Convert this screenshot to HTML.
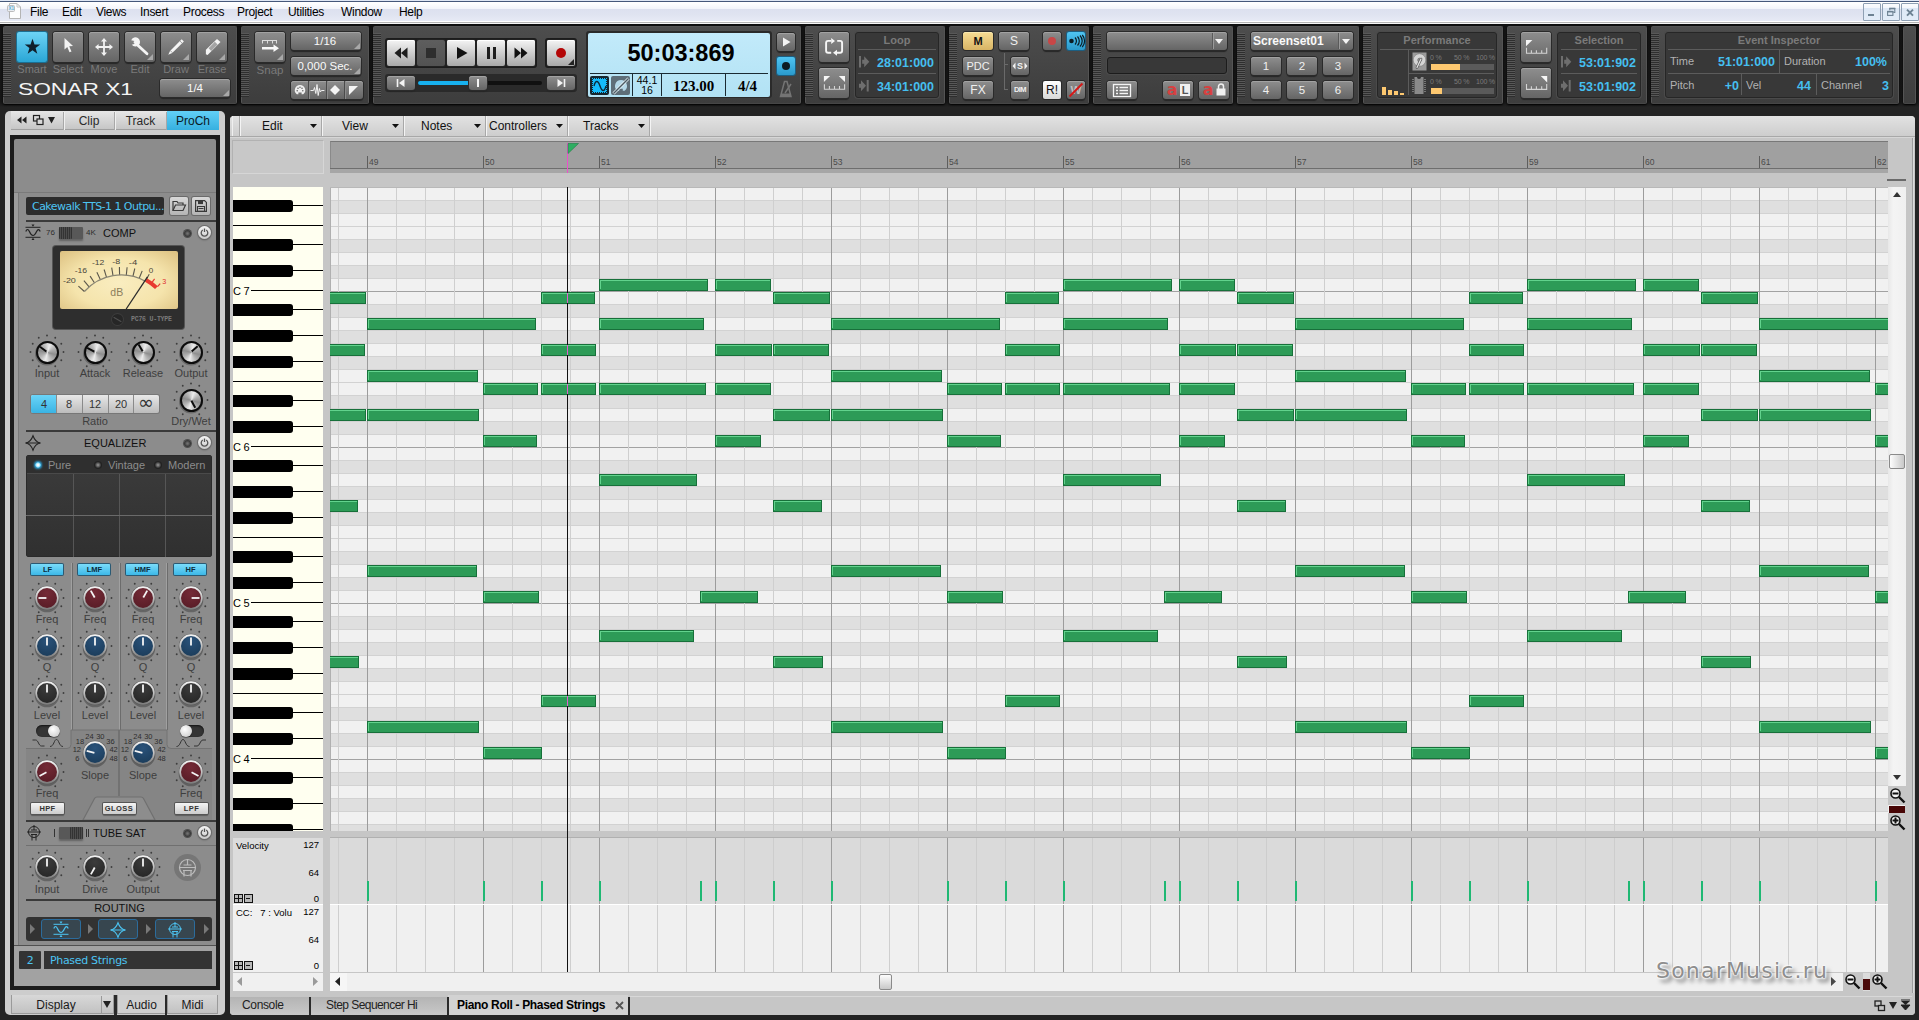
<!DOCTYPE html><html><head><meta charset="utf-8"><title>SONAR X1</title><style>
html,body{margin:0;padding:0;background:#232323;}
body{width:1919px;height:1020px;position:relative;overflow:hidden;font-family:"Liberation Sans",sans-serif;font-size:12px;color:#000;}
div{position:absolute;box-sizing:border-box;}
svg{position:absolute;overflow:visible;}
.t{white-space:nowrap;}
.c{text-align:center;}
.r{text-align:right;}
.mod{background:linear-gradient(#4d4d4d,#3d3d3d);border:1px solid #545454;border-bottom-color:#464646;border-radius:2px;box-shadow:0 1px 2px #000;}
.grip{background:repeating-linear-gradient(#585858 0,#585858 1px,#2e2e2e 1px,#2e2e2e 2px);}
.btn{background:linear-gradient(#8e8e8e,#656565);border-radius:3px;box-shadow:0 0 0 1px #2a2a2a, 0 2px 1px #262626, inset 0 1px 0 #a2a2a2;}
.lbtn{background:linear-gradient(#f4f4f4,#a8a8a8);border-radius:2px;box-shadow:0 0 0 1px #222, inset 0 1px 0 #fff;}
.disp{background:#383838;border:1px solid #262626;border-radius:3px;box-shadow:0 0 0 1px #4a4a4a;}
.dl{background:#5c5c5c;}
.cy{color:#45bff0;font-weight:bold;}
.gl{color:#7c7c7c;}
.wl{color:#c8c8c8;}
</style></head><body>
<div style="left:0px;top:0px;width:1919px;height:24px;background:linear-gradient(#ffffff 0px,#ffffff 3px,#f2f4fa 9px,#dde1ef 9.500px,#e0e4f1 15px,#e7eaf5 21px,#ffffff 21px,#ffffff 22px,#b4b4b4 22px,#b4b4b4 23px,#f6f6f6 23px);"></div>
<div style="left:0px;top:0px;width:1919px;height:1px;background:#dfe7f4;"></div>
<div style="left:0px;top:1px;width:1919px;height:1px;background:#46587a;"></div>
<div style="left:0px;top:24px;width:1919px;height:83px;background:linear-gradient(#0c0c0c 0,#141414 4px,#161616 78px,#232323 83px);"></div>
<svg style="left:0px;top:0px" width="24" height="22" viewBox="0 0 24 22"><path d="M9.500 3.500h7.500l3.500 3.500v11.500h-11z" fill="#fdfdfd" stroke="#b4b4b4"/><path d="M17 3.500v3.500h3.500" fill="none" stroke="#c4c4c4"/><rect x="7.500" y="5.500" width="7" height="6" rx="1" fill="#e9ecf1" stroke="#bcbcbc"/><text x="8.500" y="10.300" font-size="4.500" fill="#5ab0d8" font-family="Liberation Sans, sans-serif" font-weight="bold">X1</text></svg>
<div class="t" style="left:30px;top:4px;width:60px;height:17px;line-height:17px;font-size:12px;color:#000;letter-spacing:-0.3px;">File</div>
<div class="t" style="left:62px;top:4px;width:60px;height:17px;line-height:17px;font-size:12px;color:#000;letter-spacing:-0.3px;">Edit</div>
<div class="t" style="left:96px;top:4px;width:60px;height:17px;line-height:17px;font-size:12px;color:#000;letter-spacing:-0.3px;">Views</div>
<div class="t" style="left:140px;top:4px;width:60px;height:17px;line-height:17px;font-size:12px;color:#000;letter-spacing:-0.3px;">Insert</div>
<div class="t" style="left:183px;top:4px;width:60px;height:17px;line-height:17px;font-size:12px;color:#000;letter-spacing:-0.3px;">Process</div>
<div class="t" style="left:237px;top:4px;width:60px;height:17px;line-height:17px;font-size:12px;color:#000;letter-spacing:-0.3px;">Project</div>
<div class="t" style="left:288px;top:4px;width:60px;height:17px;line-height:17px;font-size:12px;color:#000;letter-spacing:-0.3px;">Utilities</div>
<div class="t" style="left:341px;top:4px;width:60px;height:17px;line-height:17px;font-size:12px;color:#000;letter-spacing:-0.3px;">Window</div>
<div class="t" style="left:399px;top:4px;width:60px;height:17px;line-height:17px;font-size:12px;color:#000;letter-spacing:-0.3px;">Help</div>
<div style="left:1863px;top:3px;width:18px;height:18px;border:1px solid #8fa0b4;background:linear-gradient(#fbfcfe 0,#f4f7fc 22%,#dde8f6 24%,#e2ecf8 100%);border-radius:1px;"></div>
<div style="left:1882px;top:3px;width:18px;height:18px;border:1px solid #8fa0b4;background:linear-gradient(#fbfcfe 0,#f4f7fc 22%,#dde8f6 24%,#e2ecf8 100%);border-radius:1px;"></div>
<div style="left:1901px;top:3px;width:18px;height:18px;border:1px solid #8fa0b4;background:linear-gradient(#fbfcfe 0,#f4f7fc 22%,#dde8f6 24%,#e2ecf8 100%);border-radius:1px;"></div>
<div style="left:1868px;top:14px;width:6px;height:2px;background:#6d8293;"></div>
<svg style="left:1885px;top:6px" width="12" height="12" viewBox="0 0 12 12"><path d="M4.8 4.2V2.6h5v3.900h-1.400" fill="none" stroke="#6d8293" stroke-width="1.100"/><path d="M4.300 2.400h6" stroke="#6d8293" stroke-width="1.400"/><rect x="2.600" y="5.600" width="5.300" height="3.800" fill="none" stroke="#6d8293" stroke-width="1.100"/><path d="M2.100 5.600h6.300" stroke="#6d8293" stroke-width="1.500"/></svg>
<svg style="left:1904px;top:6px" width="12" height="12" viewBox="0 0 12 12"><path d="M3 3.600l6 6M9 3.600l-6 6" stroke="#6d8293" stroke-width="2"/></svg>
<div class="mod" style="left:3px;top:26px;width:234px;height:78px;"></div>
<div class="grip" style="left:3px;top:33px;width:8px;height:64px;"></div>
<div class="mod" style="left:241px;top:26px;width:128px;height:78px;"></div>
<div class="grip" style="left:241px;top:33px;width:8px;height:64px;"></div>
<div class="mod" style="left:373px;top:26px;width:428px;height:78px;"></div>
<div class="grip" style="left:373px;top:33px;width:8px;height:64px;"></div>
<div class="mod" style="left:805px;top:26px;width:140px;height:78px;"></div>
<div class="grip" style="left:805px;top:33px;width:8px;height:64px;"></div>
<div class="mod" style="left:949px;top:26px;width:140px;height:78px;"></div>
<div class="grip" style="left:949px;top:33px;width:8px;height:64px;"></div>
<div class="mod" style="left:1093px;top:26px;width:140px;height:78px;"></div>
<div class="grip" style="left:1093px;top:33px;width:8px;height:64px;"></div>
<div class="mod" style="left:1237px;top:26px;width:122px;height:78px;"></div>
<div class="grip" style="left:1237px;top:33px;width:8px;height:64px;"></div>
<div class="mod" style="left:1363px;top:26px;width:140px;height:78px;"></div>
<div class="grip" style="left:1363px;top:33px;width:8px;height:64px;"></div>
<div class="mod" style="left:1507px;top:26px;width:140px;height:78px;"></div>
<div class="grip" style="left:1507px;top:33px;width:8px;height:64px;"></div>
<div class="mod" style="left:1651px;top:26px;width:248px;height:78px;"></div>
<div class="grip" style="left:1651px;top:33px;width:8px;height:64px;"></div>
<div class="mod" style="left:1903px;top:26px;width:13px;height:78px;"></div>
<div style="left:17px;top:32px;width:30px;height:30px;background:linear-gradient(#6dd3f6,#2aa6d6);border-radius:2px;box-shadow:0 0 0 1px #1c6f92;"></div>
<div class="t c" style="left:11px;top:63px;width:42px;height:13px;line-height:13px;font-size:11px;color:#7a7a7a;">Smart</div>
<div class="btn" style="left:53px;top:32px;width:30px;height:30px;"></div>
<div class="t c" style="left:47px;top:63px;width:42px;height:13px;line-height:13px;font-size:11px;color:#7a7a7a;">Select</div>
<div class="btn" style="left:89px;top:32px;width:30px;height:30px;"></div>
<div class="t c" style="left:83px;top:63px;width:42px;height:13px;line-height:13px;font-size:11px;color:#7a7a7a;">Move</div>
<div class="btn" style="left:125px;top:32px;width:30px;height:30px;"></div>
<div class="t c" style="left:119px;top:63px;width:42px;height:13px;line-height:13px;font-size:11px;color:#7a7a7a;">Edit</div>
<svg style="left:147px;top:54px" width="6" height="6"><path d="M6 0v6h-6z" fill="#a8a8a8"/></svg>
<div class="btn" style="left:161px;top:32px;width:30px;height:30px;"></div>
<div class="t c" style="left:155px;top:63px;width:42px;height:13px;line-height:13px;font-size:11px;color:#7a7a7a;">Draw</div>
<svg style="left:183px;top:54px" width="6" height="6"><path d="M6 0v6h-6z" fill="#a8a8a8"/></svg>
<div class="btn" style="left:197px;top:32px;width:30px;height:30px;"></div>
<div class="t c" style="left:191px;top:63px;width:42px;height:13px;line-height:13px;font-size:11px;color:#7a7a7a;">Erase</div>
<svg style="left:219px;top:54px" width="6" height="6"><path d="M6 0v6h-6z" fill="#a8a8a8"/></svg>
<svg style="left:24px;top:38px" width="17" height="17" viewBox="0 0 17 17"><path d="M8.5 0.8l2 5.6h5.7l-4.6 3.5 1.7 5.8-4.8-3.5-4.8 3.5 1.7-5.8-4.6-3.5h5.7z" fill="#10202c"/></svg>
<svg style="left:63px;top:37px" width="12" height="18" viewBox="0 0 12 18"><path d="M1.5 1l0 11.5 2.8-2.6 2.2 5.4 2-0.9-2.3-5.2 3.8-0.2z" fill="#f2f2f2"/></svg>
<svg style="left:94px;top:37px" width="20" height="20" viewBox="0 0 20 20"><path d="M10 1l3 3.6h-2.1v4.5h4.5V7l3.6 3-3.6 3v-2.1h-4.5v4.5H13l-3 3.6-3-3.6h2.1v-4.5H4.6V13L1 10l3.6-3v2.1h4.5V4.6H7z" fill="#f2f2f2"/></svg>
<svg style="left:125px;top:32px" width="30" height="30" viewBox="0 0 30 30"><path d="M6.2 8.200A4.600 4.600 0 1 1 6.800 12.800L9.800 11.800A1.400 1.400 0 0 1 9.500 9.100z" fill="#f4f4f4"/><path d="M12.500 13L22 21.800" stroke="#f4f4f4" stroke-width="2.800" stroke-linecap="round"/></svg>
<svg style="left:161px;top:32px" width="30" height="30" viewBox="0 0 30 30"><path d="M7.300 22.800L9 18.900L20.700 7.200L22.900 9.400L11.200 21.100z" fill="#f4f4f4"/><path d="M9.300 18.600l2.200 2.200M18.900 9l2.200 2.200" stroke="#7c7c7c" stroke-width=".7"/></svg>
<svg style="left:197px;top:32px" width="30" height="30" viewBox="0 0 30 30"><path d="M20 7L23.500 10L10.600 23L8.900 22.200L8.900 17.800z" fill="#f4f4f4"/><path d="M17.800 9.800L20.600 12.400L14.200 18.900L11.600 16.200z" fill="#a4a4a4"/></svg>
<svg style="left:18px;top:83px" width="116" height="13" viewBox="0 0 116 13"><text x="0" y="12" font-family="Liberation Sans, sans-serif" font-size="16.5" fill="#f4f4f4" textLength="115" lengthAdjust="spacingAndGlyphs" font-weight="normal">SONAR X1</text></svg>
<div class="btn" style="left:160px;top:79px;width:70px;height:18px;"></div>
<div class="t c" style="left:160px;top:78.8px;width:70px;height:18px;line-height:18px;color:#fafafa;font-size:11.500px;">1/4</div>
<svg style="left:223px;top:90px" width="6" height="6"><path d="M6 0v6h-6z" fill="#a8a8a8"/></svg>
<div class="btn" style="left:255px;top:32px;width:30px;height:30px;"></div>
<svg style="left:259px;top:38px" width="22" height="18" viewBox="0 0 22 18"><path d="M3 2.500h15M3.500 2.500v3M8.500 2.500v3M13.500 2.500v3M17.500 2.500v3" stroke="#dcdcdc" stroke-width="1" fill="none"/><path d="M3 9h11.500V6.500L20 10.200l-5.500 3.700V11.500H3z" fill="#f8f8f8"/></svg>
<svg style="left:277px;top:54px" width="6" height="6"><path d="M6 0v6h-6z" fill="#a8a8a8"/></svg>
<div class="t c" style="left:249px;top:64px;width:42px;height:13px;line-height:13px;font-size:11.5px;color:#7a7a7a;">Snap</div>
<div class="btn" style="left:291px;top:32px;width:70px;height:18px;"></div>
<div class="t c" style="left:291px;top:31.8px;width:68px;height:18px;line-height:18px;color:#fafafa;font-size:11.500px;">1/16</div>
<svg style="left:354px;top:43px" width="6" height="6"><path d="M6 0v6h-6z" fill="#a8a8a8"/></svg>
<div class="btn" style="left:291px;top:57px;width:70px;height:18px;"></div>
<div class="t c" style="left:291px;top:56.6px;width:68px;height:18px;line-height:18px;color:#fafafa;font-size:11.500px;">0,000 Sec.</div>
<svg style="left:354px;top:68px" width="6" height="6"><path d="M6 0v6h-6z" fill="#a8a8a8"/></svg>
<div class="btn" style="left:291px;top:81px;width:72px;height:18px;"></div>
<div style="left:308px;top:81px;width:1px;height:18px;background:#4a4a4a;"></div>
<div style="left:309px;top:81px;width:1px;height:18px;background:#8a8a8a;"></div>
<div style="left:326px;top:81px;width:1px;height:18px;background:#4a4a4a;"></div>
<div style="left:327px;top:81px;width:1px;height:18px;background:#8a8a8a;"></div>
<div style="left:344px;top:81px;width:1px;height:18px;background:#4a4a4a;"></div>
<div style="left:345px;top:81px;width:1px;height:18px;background:#8a8a8a;"></div>
<svg style="left:292.500px;top:83px" width="14" height="14" viewBox="0 0 14 14"><path d="M7 2a5.2 5.2 0 0 1 3.2 9.3H8.6V9.6H5.4v1.7H3.8A5.2 5.2 0 0 1 7 2z" fill="#f0f0f0"/><g fill="#666"><circle cx="4.2" cy="7.8" r=".8"/><circle cx="5" cy="5.2" r=".8"/><circle cx="7" cy="4.2" r=".8"/><circle cx="9" cy="5.2" r=".8"/><circle cx="9.8" cy="7.8" r=".8"/></g></svg>
<svg style="left:310px;top:83px" width="15" height="14" viewBox="0 0 15 14"><path d="M0.5 7.5h3l1-3 1.3 6 1.2-9 1.2 11 1.2-7 1 3.5 1-1.5h3" fill="none" stroke="#f0f0f0" stroke-width="1"/></svg>
<svg style="left:329px;top:84px" width="12" height="12" viewBox="0 0 12 12"><path d="M6 1l5 5-5 5-5-5z" fill="#f4f4f4"/></svg>
<svg style="left:348px;top:85px" width="11" height="11" viewBox="0 0 11 11"><path d="M1 1h9L1 10z" fill="#f4f4f4"/></svg>
<div style="left:385px;top:38px;width:152px;height:30px;background:#1c1c1c;border-radius:3px;"></div>
<div class="lbtn" style="left:387px;top:40px;width:28px;height:26px;"></div>
<div style="left:417px;top:40px;width:28px;height:26px;background:linear-gradient(#5e5e5e,#525252);border-radius:2px;box-shadow:0 0 0 1px #222;"></div>
<div class="lbtn" style="left:447px;top:40px;width:28px;height:26px;"></div>
<div class="lbtn" style="left:477px;top:40px;width:28px;height:26px;"></div>
<div class="lbtn" style="left:507px;top:40px;width:28px;height:26px;"></div>
<svg style="left:394px;top:46px" width="14" height="14" viewBox="0 0 14 14"><path d="M7 1.5v11L0.5 7zM13.5 1.5v11L7 7z" fill="#1e1e1e"/></svg>
<div style="left:426px;top:48px;width:10px;height:10px;background:#2e2e2e;"></div>
<svg style="left:456px;top:46px" width="12" height="14" viewBox="0 0 12 14"><path d="M1 1l10.5 6L1 13z" fill="#111"/></svg>
<div style="left:486.5px;top:47px;width:3px;height:12px;background:#1e1e1e;"></div>
<div style="left:492.5px;top:47px;width:3px;height:12px;background:#1e1e1e;"></div>
<svg style="left:514px;top:46px" width="14" height="14" viewBox="0 0 14 14"><path d="M0.5 1.5v11L7 7zM7 1.5v11L13.500 7z" fill="#111"/></svg>
<div style="left:545px;top:38px;width:32px;height:30px;background:#1c1c1c;border-radius:3px;"></div>
<div class="lbtn" style="left:547px;top:40px;width:28px;height:26px;"></div>
<div style="left:556px;top:48px;width:10px;height:10px;background:#b40606;border-radius:50%;"></div>
<svg style="left:568px;top:59px" width="6" height="6"><path d="M6 0v6h-6z" fill="#222"/></svg>
<div style="left:385px;top:74px;width:192px;height:18px;background:#2a2a2a;border-radius:3px;"></div>
<div class="btn" style="left:387px;top:76px;width:28px;height:14px;"></div>
<svg style="left:396px;top:78px" width="10" height="10" viewBox="0 0 10 10"><path d="M1.5 1v8" stroke="#f4f4f4" stroke-width="1.6"/><path d="M8.5 1v8L3 5z" fill="#f4f4f4"/></svg>
<div class="btn" style="left:547px;top:76px;width:28px;height:14px;"></div>
<svg style="left:556px;top:78px" width="10" height="10" viewBox="0 0 10 10"><path d="M8.500 1v8" stroke="#f4f4f4" stroke-width="1.6"/><path d="M1.5 1v8L7 5z" fill="#f4f4f4"/></svg>
<div style="left:418px;top:81px;width:124px;height:4px;background:#101010;border-radius:2px;"></div>
<div style="left:418px;top:81px;width:55px;height:4px;background:#17b0ee;border-radius:2px;"></div>
<div class="btn" style="left:469px;top:76px;width:18px;height:14px;"></div>
<div style="left:477px;top:79px;width:2px;height:8px;background:#f4f4f4;"></div>
<div style="left:586px;top:31px;width:186px;height:67px;background:#2a2a2a;border-radius:3px;"></div>
<div style="left:588px;top:33px;width:182px;height:64px;background:linear-gradient(#c2eafa,#b2e2f4);border-radius:2px;"></div>
<div class="t c" style="left:590px;top:35px;width:182px;height:36px;line-height:36px;font-size:23.5px;font-weight:bold;color:#000;letter-spacing:0px;">50:03:869</div>
<div style="left:590px;top:73px;width:178px;height:1px;background:#1a2a32;"></div>
<div style="left:590px;top:76px;width:19px;height:19px;background:#14bcfc;border:3px solid #16262e;border-radius:2px;"></div>
<div style="left:592px;top:78px;width:15px;height:15px;border:1px dotted #14bcfc;"></div>
<svg style="left:593px;top:80px" width="14" height="12" viewBox="0 0 14 12"><path d="M1 6c1.500-6 4-6 6 0s4.500 6 6 0" fill="none" stroke="#0c2c3c" stroke-width="1.4"/></svg>
<div style="left:611px;top:76px;width:19px;height:19px;background:#5e6e78;border-radius:2px;"></div>
<svg style="left:611.500px;top:76.500px" width="18" height="18" viewBox="0 0 18 18"><path d="M9 3a6 6 0 0 1 3.700 10.700H10.800V11.800H7.200v1.900H5.300A6 6 0 0 1 9 3z" fill="#b4d8e8"/><path d="M1.500 16.500L16.500 1.500" stroke="#e8f4f8" stroke-width="2.800"/><path d="M1.500 16.500L16.500 1.500" stroke="#4a5a64" stroke-width="1.400"/></svg>
<div style="left:632px;top:74px;width:1px;height:22px;background:#1a2a32;"></div>
<div style="left:661px;top:74px;width:1px;height:22px;background:#1a2a32;"></div>
<div style="left:725px;top:74px;width:1px;height:22px;background:#1a2a32;"></div>
<div class="t c" style="left:633px;top:75px;width:28px;height:11px;line-height:11px;font-size:10.5px;color:#000;">44.1</div>
<div class="t c" style="left:633px;top:85px;width:28px;height:11px;line-height:11px;font-size:10.5px;color:#000;">16</div>
<div class="t c" style="left:662px;top:76px;width:63px;height:20px;line-height:20px;font-size:15px;font-weight:bold;font-family:'Liberation Serif',serif;">123.00</div>
<div class="t c" style="left:726px;top:76px;width:43px;height:20px;line-height:20px;font-size:15px;font-weight:bold;font-family:'Liberation Serif',serif;">4/4</div>
<div class="btn" style="left:777px;top:33px;width:18px;height:18px;"></div>
<svg style="left:782px;top:37px" width="9" height="10" viewBox="0 0 9 10"><path d="M1 0.500l7.500 4.500L1 9.500z" fill="#f4f4f4"/></svg>
<div style="left:777px;top:57px;width:18px;height:18px;background:linear-gradient(#4fc4f2,#2a9acc);border-radius:2px;box-shadow:0 0 0 1px #1c5f82;"></div>
<div style="left:782px;top:62px;width:8px;height:8px;background:#0c1c24;border-radius:50%;"></div>
<svg style="left:779px;top:80px" width="14" height="18" viewBox="0 0 14 18"><path d="M5.500 1.500h2.500l4 15h-10.500z" fill="none" stroke="#747474" stroke-width="1.500"/><path d="M6 13L12 4" stroke="#747474" stroke-width="1.500"/><path d="M2 13.500h10v3h-10.500z" fill="#747474"/></svg>
<div class="btn" style="left:819px;top:32px;width:30px;height:30px;"></div>
<svg style="left:819px;top:32px" width="30" height="30" viewBox="0 0 30 30"><path d="M12.200 8.900H9.100a2 2 0 0 0-2 2V18.800a2 2 0 0 0 2 2H12.200M18.200 8.900H21.100a2 2 0 0 1 2 2V18.800a2 2 0 0 1-2 2H18" fill="none" stroke="#f6f6f6" stroke-width="1.900"/><path d="M12.200 5.900L16 8.900L12.200 11.900zM18 17.800L14 20.800L18 23.800z" fill="#f6f6f6"/></svg>
<div class="btn" style="left:819px;top:68px;width:30px;height:30px;"></div>
<svg style="left:819px;top:68px" width="30" height="30" viewBox="0 0 30 30"><path d="M4.900 7.900h6.200L4.900 14.100zM26 7.900h-6.200L26 14.100z" fill="#f6f6f6"/><path d="M5.400 16.300v5h20.200v-5M10.400 18v3.300M15.500 18v3.300M20.500 18v3.300" fill="none" stroke="#d4d4d4" stroke-width="1.100"/></svg>
<div class="disp" style="left:855px;top:32px;width:84px;height:66px;"></div>
<div class="t c" style="left:855px;top:33px;width:84px;height:15px;line-height:15px;font-size:11px;font-weight:bold;color:#7a7a7a;">Loop</div>
<div class="dl" style="left:858px;top:49px;width:78px;height:1px;"></div>
<div class="dl" style="left:858px;top:73px;width:78px;height:1px;"></div>
<div class="t r cy" style="left:860px;top:55px;width:74px;height:16px;line-height:16px;font-size:12.5px;">28:01:000</div>
<div class="t r cy" style="left:860px;top:79px;width:74px;height:16px;line-height:16px;font-size:12.5px;">34:01:000</div>
<svg style="left:859px;top:56px" width="12" height="12" viewBox="0 0 12 12"><rect x="0" y="0" width="2" height="11.500" fill="#6e6e6e"/><path d="M3.200 3.700h2V0.300L10.300 5.700L5.200 11.200V7.700h-2z" fill="#6e6e6e"/></svg>
<svg style="left:859px;top:80px" width="12" height="12" viewBox="0 0 12 12"><rect x="7.700" y="0" width="2" height="11.500" fill="#6e6e6e"/><path d="M0 3.700h2V0.300L7 5.700L2 11.200V7.700h-2z" fill="#6e6e6e"/></svg>
<div class="btn" style="left:963px;top:32px;width:30px;height:18px;background:linear-gradient(#f6dc94,#d8b464);box-shadow:0 0 0 1px #2a2a2a, inset 0 1px 0 #f8e8b0;"></div>
<div class="t c" style="left:963px;top:32px;width:30px;height:18px;line-height:18px;color:#f0f0f0;font-size:11px;color:#111;font-weight:bold;">M</div>
<div class="btn" style="left:999px;top:32px;width:30px;height:18px;"></div>
<div class="t c" style="left:999px;top:32px;width:30px;height:18px;line-height:18px;color:#f0f0f0;font-size:12px;">S</div>
<div class="btn" style="left:1043px;top:32px;width:18px;height:18px;"></div>
<div style="left:1048px;top:37px;width:8px;height:8px;background:#c84646;border-radius:50%;"></div>
<div style="left:1067px;top:32px;width:18px;height:18px;background:linear-gradient(#4fc4f2,#2a9acc);border-radius:2px;box-shadow:0 0 0 1px #1c5f82;"></div>
<svg style="left:1068px;top:34px" width="16" height="14" viewBox="0 0 16 14"><circle cx="3.500" cy="7" r="2.300" fill="#0c1c24"/><path d="M7 3.500a5 5 0 0 1 0 7M9.500 2.500a6.500 6.500 0 0 1 0 9M12 1.500a8 8 0 0 1 0 11M14.300 1a9 9 0 0 1 0 12" fill="none" stroke="#0c1c24" stroke-width="1.200"/></svg>
<div class="btn" style="left:963px;top:57px;width:30px;height:18px;"></div>
<div class="t c" style="left:963px;top:57px;width:30px;height:18px;line-height:18px;color:#f0f0f0;font-size:11px;">PDC</div>
<div class="btn" style="left:963px;top:81px;width:30px;height:18px;"></div>
<div class="t c" style="left:963px;top:81px;width:30px;height:18px;line-height:18px;color:#f0f0f0;font-size:12px;">FX</div>
<div style="left:1004px;top:53px;width:1px;height:37px;background:#6a6a6a;"></div>
<div style="left:1004px;top:64px;width:4px;height:1px;background:#6a6a6a;"></div>
<div style="left:1004px;top:89px;width:4px;height:1px;background:#6a6a6a;"></div>
<div class="btn" style="left:1011px;top:57px;width:18px;height:18px;"></div>
<div class="t c" style="left:1011px;top:57px;width:18px;height:18px;line-height:18px;color:#f0f0f0;font-size:9px;font-weight:bold;">S</div>
<svg style="left:1012px;top:62px" width="16" height="8" viewBox="0 0 16 8"><path d="M3.500 0.500v7L0.500 4zM12.500 0.500v7l3-3.500z" fill="#f0f0f0"/></svg>
<div class="btn" style="left:1011px;top:81px;width:18px;height:18px;"></div>
<div class="t c" style="left:1011px;top:81px;width:18px;height:18px;line-height:18px;color:#f0f0f0;font-size:7.5px;font-weight:bold;letter-spacing:-0.600px;">DIM</div>
<div style="left:1043px;top:81px;width:18px;height:18px;background:linear-gradient(#ffffff,#d8d8d8);border-radius:2px;box-shadow:0 0 0 1px #2a2a2a;"></div>
<div class="t c" style="left:1043px;top:81px;width:18px;height:18px;line-height:18px;color:#111;font-size:12px;">R!</div>
<div class="btn" style="left:1067px;top:81px;width:18px;height:18px;"></div>
<div class="t c" style="left:1067px;top:81px;width:18px;height:18px;line-height:18px;color:#f0f0f0;font-size:11.5px;color:#c0c0c0;font-weight:bold;">W</div>
<svg style="left:1068px;top:82px" width="16" height="16" viewBox="0 0 16 16"><path d="M1.500 14.500L14.500 1.500" stroke="#d41818" stroke-width="2"/></svg>
<div class="btn" style="left:1107px;top:32px;width:120px;height:18px;"></div>
<div style="left:1212px;top:33px;width:1px;height:16px;background:#5a5a5a;"></div>
<div style="left:1213px;top:33px;width:1px;height:16px;background:#9a9a9a;"></div>
<svg style="left:1214px;top:38px" width="10" height="7"><path d="M1 1h8L5 6z" fill="#f4f4f4"/></svg>
<div style="left:1107px;top:57px;width:120px;height:17px;background:#383838;border:1px solid #1c1c1c;border-radius:3px;box-shadow:0 0 0 1px #4a4a4a;"></div>
<div class="btn" style="left:1107px;top:81px;width:30px;height:18px;"></div>
<svg style="left:1113px;top:84px" width="18" height="13" viewBox="0 0 18 13"><rect x="0.500" y="0.500" width="17" height="12" fill="none" stroke="#f4f4f4" stroke-width="1.300"/><path d="M3 3.500h2M3 6.500h2M3 9.500h2M6.500 3.500h8.500M6.500 6.500h8.500M6.500 9.500h8.500" stroke="#f4f4f4" stroke-width="1.600"/></svg>
<div class="btn" style="left:1163px;top:81px;width:30px;height:18px;"></div>
<div class="t c" style="left:1165px;top:81px;width:14px;height:18px;line-height:18px;color:#d84040;font-size:15px;font-weight:bold;font-family:'DejaVu Sans',sans-serif;transform:scaleX(1.05);">a</div>
<div style="left:1180px;top:84px;width:10px;height:12px;background:#f0f0f0;"></div>
<div class="t c" style="left:1180px;top:84px;width:10px;height:12px;line-height:12px;color:#555;font-size:11px;font-weight:bold;">L</div>
<div class="btn" style="left:1199px;top:81px;width:30px;height:18px;"></div>
<div class="t c" style="left:1201px;top:81px;width:14px;height:18px;line-height:18px;color:#d84040;font-size:15px;font-weight:bold;font-family:'DejaVu Sans',sans-serif;transform:scaleX(1.05);">a</div>
<svg style="left:1216px;top:83px" width="10" height="13" viewBox="0 0 10 13"><path d="M2.500 6V3.500a2.500 2.500 0 0 1 5 0V6" fill="none" stroke="#f0f0f0" stroke-width="1.500"/><rect x="0.500" y="5.500" width="9" height="7" fill="#f0f0f0"/></svg>
<div class="btn" style="left:1251px;top:32px;width:102px;height:18px;"></div>
<div class="t" style="left:1253px;top:32px;width:90px;height:18px;line-height:18px;color:#fafafa;font-size:12px;font-weight:bold;">Screenset01</div>
<div style="left:1338px;top:33px;width:1px;height:16px;background:#5a5a5a;"></div>
<div style="left:1339px;top:33px;width:1px;height:16px;background:#9a9a9a;"></div>
<svg style="left:1341px;top:38px" width="10" height="7"><path d="M1 1h8L5 6z" fill="#f4f4f4"/></svg>
<div class="btn" style="left:1251px;top:57px;width:30px;height:18px;"></div>
<div class="t c" style="left:1251px;top:57px;width:30px;height:18px;line-height:18px;color:#f0f0f0;font-size:11.5px;">1</div>
<div class="btn" style="left:1287px;top:57px;width:30px;height:18px;"></div>
<div class="t c" style="left:1287px;top:57px;width:30px;height:18px;line-height:18px;color:#f0f0f0;font-size:11.5px;">2</div>
<div class="btn" style="left:1323px;top:57px;width:30px;height:18px;"></div>
<div class="t c" style="left:1323px;top:57px;width:30px;height:18px;line-height:18px;color:#f0f0f0;font-size:11.5px;">3</div>
<div class="btn" style="left:1251px;top:81px;width:30px;height:18px;"></div>
<div class="t c" style="left:1251px;top:81px;width:30px;height:18px;line-height:18px;color:#f0f0f0;font-size:11.5px;">4</div>
<div class="btn" style="left:1287px;top:81px;width:30px;height:18px;"></div>
<div class="t c" style="left:1287px;top:81px;width:30px;height:18px;line-height:18px;color:#f0f0f0;font-size:11.5px;">5</div>
<div class="btn" style="left:1323px;top:81px;width:30px;height:18px;"></div>
<div class="t c" style="left:1323px;top:81px;width:30px;height:18px;line-height:18px;color:#f0f0f0;font-size:11.5px;">6</div>
<div class="disp" style="left:1377px;top:32px;width:120px;height:66px;"></div>
<div class="t c" style="left:1377px;top:33px;width:120px;height:15px;line-height:15px;font-size:11px;font-weight:bold;color:#7a7a7a;">Performance</div>
<div class="dl" style="left:1380px;top:49px;width:114px;height:1px;"></div>
<div class="dl" style="left:1408px;top:50px;width:1px;height:45px;"></div>
<div class="dl" style="left:1409px;top:73px;width:85px;height:1px;"></div>
<div style="left:1382px;top:87px;width:4px;height:8px;background:#fdc870;"></div>
<div style="left:1388px;top:90px;width:4px;height:5px;background:#fdc870;"></div>
<div style="left:1394px;top:91px;width:4px;height:4px;background:#fdc870;"></div>
<div style="left:1400px;top:93px;width:4px;height:2px;background:#fdc870;"></div>
<svg style="left:1412px;top:52px" width="15" height="19" viewBox="0 0 15 19"><rect x="0.500" y="0.500" width="14" height="18" fill="#9a9a9a"/><circle cx="7.500" cy="8" r="6.300" fill="#d4d4d4" stroke="#777" stroke-width=".6"/><circle cx="7.500" cy="8" r="1.800" fill="#9a9a9a" stroke="#555" stroke-width=".6"/><path d="M9 7L5 15.500" stroke="#555" stroke-width="2.600" stroke-linecap="round"/><path d="M9 7L5 15.500" stroke="#e4e4e4" stroke-width="1.300" stroke-linecap="round"/></svg>
<svg style="left:1412px;top:76px" width="14" height="19" viewBox="0 0 14 19"><rect x="2.500" y="1" width="9" height="17" fill="#8a8a8a"/><path d="M5 1a2 2 0 0 0 4 0z" fill="#323232"/><path d="M1 3v14M13 3v14" stroke="#8a8a8a" stroke-width="1.500" stroke-dasharray="1 1"/></svg>
<div class="t" style="left:1430px;top:54px;width:20px;height:8px;line-height:8px;font-size:7px;color:#7a7a7a;letter-spacing:-0.200px;">0 %</div>
<div class="t" style="left:1454px;top:54px;width:22px;height:8px;line-height:8px;font-size:7px;color:#7a7a7a;letter-spacing:-0.200px;">50 %</div>
<div class="t" style="left:1476px;top:54px;width:24px;height:8px;line-height:8px;font-size:7px;color:#7a7a7a;letter-spacing:-0.200px;">100 %</div>
<div class="t" style="left:1430px;top:78px;width:20px;height:8px;line-height:8px;font-size:7px;color:#7a7a7a;letter-spacing:-0.200px;">0 %</div>
<div class="t" style="left:1454px;top:78px;width:22px;height:8px;line-height:8px;font-size:7px;color:#7a7a7a;letter-spacing:-0.200px;">50 %</div>
<div class="t" style="left:1476px;top:78px;width:24px;height:8px;line-height:8px;font-size:7px;color:#7a7a7a;letter-spacing:-0.200px;">100 %</div>
<div style="left:1431px;top:64px;width:63px;height:6px;background:#5a5a5a;"></div>
<div style="left:1431px;top:64px;width:29px;height:6px;background:#fdc870;"></div>
<div style="left:1431px;top:88px;width:63px;height:6px;background:#5a5a5a;"></div>
<div style="left:1431px;top:88px;width:11px;height:6px;background:#fdc870;"></div>
<div class="btn" style="left:1521px;top:32px;width:30px;height:30px;"></div>
<svg style="left:1521px;top:32px" width="30" height="30" viewBox="0 0 30 30"><path d="M5 7.900h6.400L5 14.300z" fill="#f6f6f6"/><path d="M5.500 15.800v5.500h20.200v-5.500M10.400 18.300v3M15.400 18.300v3M20.700 18.300v3" fill="none" stroke="#d4d4d4" stroke-width="1.100"/></svg>
<div class="btn" style="left:1521px;top:68px;width:30px;height:30px;"></div>
<svg style="left:1521px;top:68px" width="30" height="30" viewBox="0 0 30 30"><path d="M26.200 8h-6.400L26.200 14.500z" fill="#f6f6f6"/><path d="M5.500 15.900v5.500h20.200v-5.500M10.400 18.300v3M15.400 18.300v3M20.700 18.300v3" fill="none" stroke="#d4d4d4" stroke-width="1.100"/></svg>
<div class="disp" style="left:1557px;top:32px;width:84px;height:66px;"></div>
<div class="t c" style="left:1557px;top:33px;width:84px;height:15px;line-height:15px;font-size:11px;font-weight:bold;color:#7a7a7a;">Selection</div>
<div class="dl" style="left:1561px;top:49px;width:76px;height:1px;"></div>
<div class="dl" style="left:1561px;top:73px;width:76px;height:1px;"></div>
<div class="t r cy" style="left:1561px;top:55px;width:75px;height:16px;line-height:16px;font-size:12.5px;">53:01:902</div>
<div class="t r cy" style="left:1561px;top:79px;width:75px;height:16px;line-height:16px;font-size:12.5px;">53:01:902</div>
<svg style="left:1561px;top:56px" width="12" height="12" viewBox="0 0 12 12"><rect x="0" y="0" width="2" height="11.500" fill="#6e6e6e"/><path d="M3.200 3.700h2V0.300L10.300 5.700L5.200 11.200V7.700h-2z" fill="#6e6e6e"/></svg>
<svg style="left:1561px;top:80px" width="12" height="12" viewBox="0 0 12 12"><rect x="7.700" y="0" width="2" height="11.500" fill="#6e6e6e"/><path d="M0 3.700h2V0.300L7 5.700L2 11.200V7.700h-2z" fill="#6e6e6e"/></svg>
<div class="disp" style="left:1665px;top:32px;width:228px;height:66px;"></div>
<div class="t c" style="left:1665px;top:33px;width:228px;height:15px;line-height:15px;font-size:11px;font-weight:bold;color:#7a7a7a;">Event Inspector</div>
<div class="dl" style="left:1668px;top:49px;width:222px;height:1px;"></div>
<div class="dl" style="left:1668px;top:73px;width:222px;height:1px;"></div>
<div class="dl" style="left:1779px;top:50px;width:1px;height:23px;"></div>
<div class="dl" style="left:1741px;top:74px;width:1px;height:21px;"></div>
<div class="dl" style="left:1816px;top:74px;width:1px;height:21px;"></div>
<div class="t" style="left:1670px;top:53px;width:40px;height:16px;line-height:16px;font-size:11px;color:#b2b2b2;">Time</div>
<div class="t r cy" style="left:1700px;top:54px;width:75px;height:16px;line-height:16px;font-size:12.500px;">51:01:000</div>
<div class="t" style="left:1784px;top:53px;width:50px;height:16px;line-height:16px;font-size:11px;color:#b2b2b2;">Duration</div>
<div class="t r cy" style="left:1830px;top:54px;width:57px;height:16px;line-height:16px;font-size:12.500px;">100%</div>
<div class="t" style="left:1670px;top:77px;width:40px;height:16px;line-height:16px;font-size:11px;color:#b2b2b2;">Pitch</div>
<div class="t r cy" style="left:1700px;top:78px;width:39px;height:16px;line-height:16px;font-size:12.500px;">+0</div>
<div class="t" style="left:1746px;top:77px;width:30px;height:16px;line-height:16px;font-size:11px;color:#b2b2b2;">Vel</div>
<div class="t r cy" style="left:1780px;top:78px;width:31px;height:16px;line-height:16px;font-size:12.500px;">44</div>
<div class="t" style="left:1821px;top:77px;width:50px;height:16px;line-height:16px;font-size:11px;color:#b2b2b2;">Channel</div>
<div class="t r cy" style="left:1860px;top:78px;width:29px;height:16px;line-height:16px;font-size:12.500px;">3</div>
<div style="left:230px;top:116px;width:1685px;height:899px;background:#c6c6c6;border-radius:4px 4px 4px 4px;"></div>
<div style="left:230px;top:116px;width:1685px;height:21px;background:linear-gradient(#e2e2e2,#cdcdcd);border-radius:4px 4px 0 0;border-bottom:1px solid #a8a8a8;"></div>
<div style="left:230px;top:137px;width:1685px;height:1px;background:#d6d6d6;"></div>
<div style="left:232px;top:116px;width:1px;height:20px;background:#f0f0f0;"></div>
<div style="left:239px;top:116px;width:1px;height:20px;background:#a8a8a8;"></div>
<div style="left:240px;top:116px;width:1px;height:20px;background:#f4f4f4;"></div>
<div style="left:321px;top:116px;width:1px;height:20px;background:#a8a8a8;"></div>
<div style="left:322px;top:116px;width:1px;height:20px;background:#f4f4f4;"></div>
<div style="left:403px;top:116px;width:1px;height:20px;background:#a8a8a8;"></div>
<div style="left:404px;top:116px;width:1px;height:20px;background:#f4f4f4;"></div>
<div style="left:485px;top:116px;width:1px;height:20px;background:#a8a8a8;"></div>
<div style="left:486px;top:116px;width:1px;height:20px;background:#f4f4f4;"></div>
<div style="left:567px;top:116px;width:1px;height:20px;background:#a8a8a8;"></div>
<div style="left:568px;top:116px;width:1px;height:20px;background:#f4f4f4;"></div>
<div style="left:649px;top:116px;width:1px;height:20px;background:#a8a8a8;"></div>
<div style="left:650px;top:116px;width:1px;height:20px;background:#f4f4f4;"></div>
<div class="t" style="left:262px;top:117px;width:80px;height:18px;line-height:18px;font-size:12px;color:#111;">Edit</div>
<div class="t" style="left:342px;top:117px;width:80px;height:18px;line-height:18px;font-size:12px;color:#111;">View</div>
<div class="t" style="left:421px;top:117px;width:80px;height:18px;line-height:18px;font-size:12px;color:#111;">Notes</div>
<div class="t" style="left:489px;top:117px;width:80px;height:18px;line-height:18px;font-size:12px;color:#111;">Controllers</div>
<div class="t" style="left:583px;top:117px;width:80px;height:18px;line-height:18px;font-size:12px;color:#111;">Tracks</div>
<svg style="left:310px;top:124px" width="7" height="4"><path d="M0 0h7L3.500 4z" fill="#111"/></svg>
<svg style="left:392px;top:124px" width="7" height="4"><path d="M0 0h7L3.500 4z" fill="#111"/></svg>
<svg style="left:474px;top:124px" width="7" height="4"><path d="M0 0h7L3.500 4z" fill="#111"/></svg>
<svg style="left:556px;top:124px" width="7" height="4"><path d="M0 0h7L3.500 4z" fill="#111"/></svg>
<svg style="left:638px;top:124px" width="7" height="4"><path d="M0 0h7L3.500 4z" fill="#111"/></svg>
<div style="left:232px;top:140px;width:92px;height:34px;background:#c8c8c8;border:1px solid #b2b2b2;border-right-color:#d6d6d6;border-bottom-color:#d6d6d6;"></div>
<div style="left:330px;top:141px;width:1558px;height:32px;background:#a0a0a0;border-top:1px solid #787878;border-left:1px solid #8a8a8a;"></div>
<div style="left:330px;top:168px;width:1558px;height:1px;background:#6e6e6e;"></div>
<div style="left:330px;top:169px;width:1558px;height:4px;background:#a6a6a6;"></div>
<div style="left:367px;top:156px;width:1px;height:12px;background:#5e5e5e;"></div>
<div class="t" style="left:369px;top:156.5px;width:20px;height:10px;line-height:10px;font-size:8.500px;color:#4a4a4a;">49</div>
<div style="left:483px;top:156px;width:1px;height:12px;background:#5e5e5e;"></div>
<div class="t" style="left:485px;top:156.5px;width:20px;height:10px;line-height:10px;font-size:8.500px;color:#4a4a4a;">50</div>
<div style="left:599px;top:156px;width:1px;height:12px;background:#5e5e5e;"></div>
<div class="t" style="left:601px;top:156.5px;width:20px;height:10px;line-height:10px;font-size:8.500px;color:#4a4a4a;">51</div>
<div style="left:715px;top:156px;width:1px;height:12px;background:#5e5e5e;"></div>
<div class="t" style="left:717px;top:156.5px;width:20px;height:10px;line-height:10px;font-size:8.500px;color:#4a4a4a;">52</div>
<div style="left:831px;top:156px;width:1px;height:12px;background:#5e5e5e;"></div>
<div class="t" style="left:833px;top:156.5px;width:20px;height:10px;line-height:10px;font-size:8.500px;color:#4a4a4a;">53</div>
<div style="left:947px;top:156px;width:1px;height:12px;background:#5e5e5e;"></div>
<div class="t" style="left:949px;top:156.5px;width:20px;height:10px;line-height:10px;font-size:8.500px;color:#4a4a4a;">54</div>
<div style="left:1063px;top:156px;width:1px;height:12px;background:#5e5e5e;"></div>
<div class="t" style="left:1065px;top:156.5px;width:20px;height:10px;line-height:10px;font-size:8.500px;color:#4a4a4a;">55</div>
<div style="left:1179px;top:156px;width:1px;height:12px;background:#5e5e5e;"></div>
<div class="t" style="left:1181px;top:156.5px;width:20px;height:10px;line-height:10px;font-size:8.500px;color:#4a4a4a;">56</div>
<div style="left:1295px;top:156px;width:1px;height:12px;background:#5e5e5e;"></div>
<div class="t" style="left:1297px;top:156.5px;width:20px;height:10px;line-height:10px;font-size:8.500px;color:#4a4a4a;">57</div>
<div style="left:1411px;top:156px;width:1px;height:12px;background:#5e5e5e;"></div>
<div class="t" style="left:1413px;top:156.5px;width:20px;height:10px;line-height:10px;font-size:8.500px;color:#4a4a4a;">58</div>
<div style="left:1527px;top:156px;width:1px;height:12px;background:#5e5e5e;"></div>
<div class="t" style="left:1529px;top:156.5px;width:20px;height:10px;line-height:10px;font-size:8.500px;color:#4a4a4a;">59</div>
<div style="left:1643px;top:156px;width:1px;height:12px;background:#5e5e5e;"></div>
<div class="t" style="left:1645px;top:156.5px;width:20px;height:10px;line-height:10px;font-size:8.500px;color:#4a4a4a;">60</div>
<div style="left:1759px;top:156px;width:1px;height:12px;background:#5e5e5e;"></div>
<div class="t" style="left:1761px;top:156.5px;width:20px;height:10px;line-height:10px;font-size:8.500px;color:#4a4a4a;">61</div>
<div style="left:1875px;top:156px;width:1px;height:12px;background:#5e5e5e;"></div>
<div class="t" style="left:1877px;top:156.5px;width:20px;height:10px;line-height:10px;font-size:8.500px;color:#4a4a4a;">62</div>
<div style="left:567px;top:143px;width:1px;height:30px;background:#ec50cc;"></div>
<svg style="left:568px;top:143px" width="12" height="11"><path d="M0 0.500h10.500L0 10.500z" fill="#2fae62" stroke="#1c7c44" stroke-width=".6"/></svg>
<div style="left:233px;top:187px;width:90px;height:644px;background:#fffff0;"></div>
<div style="left:233px;top:200px;width:60px;height:12px;background:#000;border-radius:0 3px 3px 0;"></div><div style="left:293px;top:205px;width:30px;height:1px;background:#000;"></div><div style="left:233px;top:225px;width:90px;height:1px;background:#000;"></div><div style="left:233px;top:239px;width:60px;height:12px;background:#000;border-radius:0 3px 3px 0;"></div><div style="left:293px;top:244px;width:30px;height:1px;background:#000;"></div><div style="left:233px;top:265px;width:60px;height:12px;background:#000;border-radius:0 3px 3px 0;"></div><div style="left:293px;top:270px;width:30px;height:1px;background:#000;"></div><div style="left:233px;top:290px;width:90px;height:1px;background:#000;"></div><div style="left:233px;top:304px;width:60px;height:12px;background:#000;border-radius:0 3px 3px 0;"></div><div style="left:293px;top:309px;width:30px;height:1px;background:#000;"></div><div style="left:233px;top:330px;width:60px;height:12px;background:#000;border-radius:0 3px 3px 0;"></div><div style="left:293px;top:335px;width:30px;height:1px;background:#000;"></div><div style="left:233px;top:356px;width:60px;height:12px;background:#000;border-radius:0 3px 3px 0;"></div><div style="left:293px;top:361px;width:30px;height:1px;background:#000;"></div><div style="left:233px;top:381px;width:90px;height:1px;background:#000;"></div><div style="left:233px;top:395px;width:60px;height:12px;background:#000;border-radius:0 3px 3px 0;"></div><div style="left:293px;top:400px;width:30px;height:1px;background:#000;"></div><div style="left:233px;top:421px;width:60px;height:12px;background:#000;border-radius:0 3px 3px 0;"></div><div style="left:293px;top:426px;width:30px;height:1px;background:#000;"></div><div style="left:233px;top:446px;width:90px;height:1px;background:#000;"></div><div style="left:233px;top:460px;width:60px;height:12px;background:#000;border-radius:0 3px 3px 0;"></div><div style="left:293px;top:465px;width:30px;height:1px;background:#000;"></div><div style="left:233px;top:486px;width:60px;height:12px;background:#000;border-radius:0 3px 3px 0;"></div><div style="left:293px;top:491px;width:30px;height:1px;background:#000;"></div><div style="left:233px;top:512px;width:60px;height:12px;background:#000;border-radius:0 3px 3px 0;"></div><div style="left:293px;top:517px;width:30px;height:1px;background:#000;"></div><div style="left:233px;top:537px;width:90px;height:1px;background:#000;"></div><div style="left:233px;top:551px;width:60px;height:12px;background:#000;border-radius:0 3px 3px 0;"></div><div style="left:293px;top:556px;width:30px;height:1px;background:#000;"></div><div style="left:233px;top:577px;width:60px;height:12px;background:#000;border-radius:0 3px 3px 0;"></div><div style="left:293px;top:582px;width:30px;height:1px;background:#000;"></div><div style="left:233px;top:602px;width:90px;height:1px;background:#000;"></div><div style="left:233px;top:616px;width:60px;height:12px;background:#000;border-radius:0 3px 3px 0;"></div><div style="left:293px;top:621px;width:30px;height:1px;background:#000;"></div><div style="left:233px;top:642px;width:60px;height:12px;background:#000;border-radius:0 3px 3px 0;"></div><div style="left:293px;top:647px;width:30px;height:1px;background:#000;"></div><div style="left:233px;top:668px;width:60px;height:12px;background:#000;border-radius:0 3px 3px 0;"></div><div style="left:293px;top:673px;width:30px;height:1px;background:#000;"></div><div style="left:233px;top:693px;width:90px;height:1px;background:#000;"></div><div style="left:233px;top:707px;width:60px;height:12px;background:#000;border-radius:0 3px 3px 0;"></div><div style="left:293px;top:712px;width:30px;height:1px;background:#000;"></div><div style="left:233px;top:733px;width:60px;height:12px;background:#000;border-radius:0 3px 3px 0;"></div><div style="left:293px;top:738px;width:30px;height:1px;background:#000;"></div><div style="left:233px;top:758px;width:90px;height:1px;background:#000;"></div><div style="left:233px;top:772px;width:60px;height:12px;background:#000;border-radius:0 3px 3px 0;"></div><div style="left:293px;top:777px;width:30px;height:1px;background:#000;"></div><div style="left:233px;top:798px;width:60px;height:12px;background:#000;border-radius:0 3px 3px 0;"></div><div style="left:293px;top:803px;width:30px;height:1px;background:#000;"></div><div style="left:233px;top:824px;width:60px;height:7px;background:#000;border-radius:0 3px 0 0;"></div><div style="left:293px;top:829px;width:30px;height:1px;background:#000;"></div>
<div class="t" style="left:233px;top:284px;width:18px;height:14px;line-height:14px;font-size:11px;color:#000;background:#fffff0;letter-spacing:-0.300px;">C 7</div>
<div class="t" style="left:233px;top:440px;width:18px;height:14px;line-height:14px;font-size:11px;color:#000;background:#fffff0;letter-spacing:-0.300px;">C 6</div>
<div class="t" style="left:233px;top:596px;width:18px;height:14px;line-height:14px;font-size:11px;color:#000;background:#fffff0;letter-spacing:-0.300px;">C 5</div>
<div class="t" style="left:233px;top:752px;width:18px;height:14px;line-height:14px;font-size:11px;color:#000;background:#fffff0;letter-spacing:-0.300px;">C 4</div>
<svg style="left:0;top:0" width="1919" height="1020" shape-rendering="crispEdges"><rect x="330" y="187" width="1558" height="644" fill="#f1f1f1"/><rect x="330" y="200" width="1558" height="13" fill="#dfdfdf"/><rect x="330" y="239" width="1558" height="13" fill="#dfdfdf"/><rect x="330" y="265" width="1558" height="13" fill="#dfdfdf"/><rect x="330" y="304" width="1558" height="13" fill="#dfdfdf"/><rect x="330" y="330" width="1558" height="13" fill="#dfdfdf"/><rect x="330" y="356" width="1558" height="13" fill="#dfdfdf"/><rect x="330" y="395" width="1558" height="13" fill="#dfdfdf"/><rect x="330" y="421" width="1558" height="13" fill="#dfdfdf"/><rect x="330" y="460" width="1558" height="13" fill="#dfdfdf"/><rect x="330" y="486" width="1558" height="13" fill="#dfdfdf"/><rect x="330" y="512" width="1558" height="13" fill="#dfdfdf"/><rect x="330" y="551" width="1558" height="13" fill="#dfdfdf"/><rect x="330" y="577" width="1558" height="13" fill="#dfdfdf"/><rect x="330" y="616" width="1558" height="13" fill="#dfdfdf"/><rect x="330" y="642" width="1558" height="13" fill="#dfdfdf"/><rect x="330" y="668" width="1558" height="13" fill="#dfdfdf"/><rect x="330" y="707" width="1558" height="13" fill="#dfdfdf"/><rect x="330" y="733" width="1558" height="13" fill="#dfdfdf"/><rect x="330" y="772" width="1558" height="13" fill="#dfdfdf"/><rect x="330" y="798" width="1558" height="13" fill="#dfdfdf"/><rect x="330" y="824" width="1558" height="7" fill="#dfdfdf"/><rect x="330" y="200" width="1558" height="1" fill="#d2d2d2"/><rect x="330" y="213" width="1558" height="1" fill="#d2d2d2"/><rect x="330" y="226" width="1558" height="1" fill="#d2d2d2"/><rect x="330" y="239" width="1558" height="1" fill="#d2d2d2"/><rect x="330" y="252" width="1558" height="1" fill="#d2d2d2"/><rect x="330" y="265" width="1558" height="1" fill="#d2d2d2"/><rect x="330" y="278" width="1558" height="1" fill="#d2d2d2"/><rect x="330" y="291" width="1558" height="1" fill="#a2a2a2"/><rect x="330" y="304" width="1558" height="1" fill="#d2d2d2"/><rect x="330" y="317" width="1558" height="1" fill="#d2d2d2"/><rect x="330" y="330" width="1558" height="1" fill="#d2d2d2"/><rect x="330" y="343" width="1558" height="1" fill="#d2d2d2"/><rect x="330" y="356" width="1558" height="1" fill="#d2d2d2"/><rect x="330" y="369" width="1558" height="1" fill="#d2d2d2"/><rect x="330" y="382" width="1558" height="1" fill="#d2d2d2"/><rect x="330" y="395" width="1558" height="1" fill="#d2d2d2"/><rect x="330" y="408" width="1558" height="1" fill="#d2d2d2"/><rect x="330" y="421" width="1558" height="1" fill="#d2d2d2"/><rect x="330" y="434" width="1558" height="1" fill="#d2d2d2"/><rect x="330" y="447" width="1558" height="1" fill="#a2a2a2"/><rect x="330" y="460" width="1558" height="1" fill="#d2d2d2"/><rect x="330" y="473" width="1558" height="1" fill="#d2d2d2"/><rect x="330" y="486" width="1558" height="1" fill="#d2d2d2"/><rect x="330" y="499" width="1558" height="1" fill="#d2d2d2"/><rect x="330" y="512" width="1558" height="1" fill="#d2d2d2"/><rect x="330" y="525" width="1558" height="1" fill="#d2d2d2"/><rect x="330" y="538" width="1558" height="1" fill="#d2d2d2"/><rect x="330" y="551" width="1558" height="1" fill="#d2d2d2"/><rect x="330" y="564" width="1558" height="1" fill="#d2d2d2"/><rect x="330" y="577" width="1558" height="1" fill="#d2d2d2"/><rect x="330" y="590" width="1558" height="1" fill="#d2d2d2"/><rect x="330" y="603" width="1558" height="1" fill="#a2a2a2"/><rect x="330" y="616" width="1558" height="1" fill="#d2d2d2"/><rect x="330" y="629" width="1558" height="1" fill="#d2d2d2"/><rect x="330" y="642" width="1558" height="1" fill="#d2d2d2"/><rect x="330" y="655" width="1558" height="1" fill="#d2d2d2"/><rect x="330" y="668" width="1558" height="1" fill="#d2d2d2"/><rect x="330" y="681" width="1558" height="1" fill="#d2d2d2"/><rect x="330" y="694" width="1558" height="1" fill="#d2d2d2"/><rect x="330" y="707" width="1558" height="1" fill="#d2d2d2"/><rect x="330" y="720" width="1558" height="1" fill="#d2d2d2"/><rect x="330" y="733" width="1558" height="1" fill="#d2d2d2"/><rect x="330" y="746" width="1558" height="1" fill="#d2d2d2"/><rect x="330" y="759" width="1558" height="1" fill="#a2a2a2"/><rect x="330" y="772" width="1558" height="1" fill="#d2d2d2"/><rect x="330" y="785" width="1558" height="1" fill="#d2d2d2"/><rect x="330" y="798" width="1558" height="1" fill="#d2d2d2"/><rect x="330" y="811" width="1558" height="1" fill="#d2d2d2"/><rect x="330" y="824" width="1558" height="1" fill="#d2d2d2"/><rect x="338" y="187" width="1" height="644" fill="#cfcfcf"/><rect x="367" y="187" width="1" height="644" fill="#9c9c9c"/><rect x="396" y="187" width="1" height="644" fill="#cfcfcf"/><rect x="425" y="187" width="1" height="644" fill="#cfcfcf"/><rect x="454" y="187" width="1" height="644" fill="#cfcfcf"/><rect x="483" y="187" width="1" height="644" fill="#9c9c9c"/><rect x="512" y="187" width="1" height="644" fill="#cfcfcf"/><rect x="541" y="187" width="1" height="644" fill="#cfcfcf"/><rect x="570" y="187" width="1" height="644" fill="#cfcfcf"/><rect x="599" y="187" width="1" height="644" fill="#9c9c9c"/><rect x="628" y="187" width="1" height="644" fill="#cfcfcf"/><rect x="657" y="187" width="1" height="644" fill="#cfcfcf"/><rect x="686" y="187" width="1" height="644" fill="#cfcfcf"/><rect x="715" y="187" width="1" height="644" fill="#9c9c9c"/><rect x="744" y="187" width="1" height="644" fill="#cfcfcf"/><rect x="773" y="187" width="1" height="644" fill="#cfcfcf"/><rect x="802" y="187" width="1" height="644" fill="#cfcfcf"/><rect x="831" y="187" width="1" height="644" fill="#9c9c9c"/><rect x="860" y="187" width="1" height="644" fill="#cfcfcf"/><rect x="889" y="187" width="1" height="644" fill="#cfcfcf"/><rect x="918" y="187" width="1" height="644" fill="#cfcfcf"/><rect x="947" y="187" width="1" height="644" fill="#9c9c9c"/><rect x="976" y="187" width="1" height="644" fill="#cfcfcf"/><rect x="1005" y="187" width="1" height="644" fill="#cfcfcf"/><rect x="1034" y="187" width="1" height="644" fill="#cfcfcf"/><rect x="1063" y="187" width="1" height="644" fill="#9c9c9c"/><rect x="1092" y="187" width="1" height="644" fill="#cfcfcf"/><rect x="1121" y="187" width="1" height="644" fill="#cfcfcf"/><rect x="1150" y="187" width="1" height="644" fill="#cfcfcf"/><rect x="1179" y="187" width="1" height="644" fill="#9c9c9c"/><rect x="1208" y="187" width="1" height="644" fill="#cfcfcf"/><rect x="1237" y="187" width="1" height="644" fill="#cfcfcf"/><rect x="1266" y="187" width="1" height="644" fill="#cfcfcf"/><rect x="1295" y="187" width="1" height="644" fill="#9c9c9c"/><rect x="1324" y="187" width="1" height="644" fill="#cfcfcf"/><rect x="1353" y="187" width="1" height="644" fill="#cfcfcf"/><rect x="1382" y="187" width="1" height="644" fill="#cfcfcf"/><rect x="1411" y="187" width="1" height="644" fill="#9c9c9c"/><rect x="1440" y="187" width="1" height="644" fill="#cfcfcf"/><rect x="1469" y="187" width="1" height="644" fill="#cfcfcf"/><rect x="1498" y="187" width="1" height="644" fill="#cfcfcf"/><rect x="1527" y="187" width="1" height="644" fill="#9c9c9c"/><rect x="1556" y="187" width="1" height="644" fill="#cfcfcf"/><rect x="1585" y="187" width="1" height="644" fill="#cfcfcf"/><rect x="1614" y="187" width="1" height="644" fill="#cfcfcf"/><rect x="1643" y="187" width="1" height="644" fill="#9c9c9c"/><rect x="1672" y="187" width="1" height="644" fill="#cfcfcf"/><rect x="1701" y="187" width="1" height="644" fill="#cfcfcf"/><rect x="1730" y="187" width="1" height="644" fill="#cfcfcf"/><rect x="1759" y="187" width="1" height="644" fill="#9c9c9c"/><rect x="1788" y="187" width="1" height="644" fill="#cfcfcf"/><rect x="1817" y="187" width="1" height="644" fill="#cfcfcf"/><rect x="1846" y="187" width="1" height="644" fill="#cfcfcf"/><rect x="1875" y="187" width="1" height="644" fill="#9c9c9c"/><rect x="330" y="187" width="1" height="644" fill="#b0b0b0"/><rect x="330" y="187" width="1558" height="1" fill="#b8b8b8"/><rect x="330" y="838" width="1558" height="66" fill="#dadada"/><rect x="330" y="837" width="1558" height="1" fill="#b0b0b0"/><rect x="338" y="838" width="1" height="66" fill="#cdcdcd"/><rect x="367" y="838" width="1" height="66" fill="#9c9c9c"/><rect x="396" y="838" width="1" height="66" fill="#cdcdcd"/><rect x="425" y="838" width="1" height="66" fill="#cdcdcd"/><rect x="454" y="838" width="1" height="66" fill="#cdcdcd"/><rect x="483" y="838" width="1" height="66" fill="#9c9c9c"/><rect x="512" y="838" width="1" height="66" fill="#cdcdcd"/><rect x="541" y="838" width="1" height="66" fill="#cdcdcd"/><rect x="570" y="838" width="1" height="66" fill="#cdcdcd"/><rect x="599" y="838" width="1" height="66" fill="#9c9c9c"/><rect x="628" y="838" width="1" height="66" fill="#cdcdcd"/><rect x="657" y="838" width="1" height="66" fill="#cdcdcd"/><rect x="686" y="838" width="1" height="66" fill="#cdcdcd"/><rect x="715" y="838" width="1" height="66" fill="#9c9c9c"/><rect x="744" y="838" width="1" height="66" fill="#cdcdcd"/><rect x="773" y="838" width="1" height="66" fill="#cdcdcd"/><rect x="802" y="838" width="1" height="66" fill="#cdcdcd"/><rect x="831" y="838" width="1" height="66" fill="#9c9c9c"/><rect x="860" y="838" width="1" height="66" fill="#cdcdcd"/><rect x="889" y="838" width="1" height="66" fill="#cdcdcd"/><rect x="918" y="838" width="1" height="66" fill="#cdcdcd"/><rect x="947" y="838" width="1" height="66" fill="#9c9c9c"/><rect x="976" y="838" width="1" height="66" fill="#cdcdcd"/><rect x="1005" y="838" width="1" height="66" fill="#cdcdcd"/><rect x="1034" y="838" width="1" height="66" fill="#cdcdcd"/><rect x="1063" y="838" width="1" height="66" fill="#9c9c9c"/><rect x="1092" y="838" width="1" height="66" fill="#cdcdcd"/><rect x="1121" y="838" width="1" height="66" fill="#cdcdcd"/><rect x="1150" y="838" width="1" height="66" fill="#cdcdcd"/><rect x="1179" y="838" width="1" height="66" fill="#9c9c9c"/><rect x="1208" y="838" width="1" height="66" fill="#cdcdcd"/><rect x="1237" y="838" width="1" height="66" fill="#cdcdcd"/><rect x="1266" y="838" width="1" height="66" fill="#cdcdcd"/><rect x="1295" y="838" width="1" height="66" fill="#9c9c9c"/><rect x="1324" y="838" width="1" height="66" fill="#cdcdcd"/><rect x="1353" y="838" width="1" height="66" fill="#cdcdcd"/><rect x="1382" y="838" width="1" height="66" fill="#cdcdcd"/><rect x="1411" y="838" width="1" height="66" fill="#9c9c9c"/><rect x="1440" y="838" width="1" height="66" fill="#cdcdcd"/><rect x="1469" y="838" width="1" height="66" fill="#cdcdcd"/><rect x="1498" y="838" width="1" height="66" fill="#cdcdcd"/><rect x="1527" y="838" width="1" height="66" fill="#9c9c9c"/><rect x="1556" y="838" width="1" height="66" fill="#cdcdcd"/><rect x="1585" y="838" width="1" height="66" fill="#cdcdcd"/><rect x="1614" y="838" width="1" height="66" fill="#cdcdcd"/><rect x="1643" y="838" width="1" height="66" fill="#9c9c9c"/><rect x="1672" y="838" width="1" height="66" fill="#cdcdcd"/><rect x="1701" y="838" width="1" height="66" fill="#cdcdcd"/><rect x="1730" y="838" width="1" height="66" fill="#cdcdcd"/><rect x="1759" y="838" width="1" height="66" fill="#9c9c9c"/><rect x="1788" y="838" width="1" height="66" fill="#cdcdcd"/><rect x="1817" y="838" width="1" height="66" fill="#cdcdcd"/><rect x="1846" y="838" width="1" height="66" fill="#cdcdcd"/><rect x="1875" y="838" width="1" height="66" fill="#9c9c9c"/><rect x="330" y="904" width="1558" height="1" fill="#ffffff"/><rect x="330" y="905" width="1558" height="67" fill="#f0f0f0"/><rect x="338" y="905" width="1" height="67" fill="#cfcfcf"/><rect x="367" y="905" width="1" height="67" fill="#9c9c9c"/><rect x="396" y="905" width="1" height="67" fill="#cfcfcf"/><rect x="425" y="905" width="1" height="67" fill="#cfcfcf"/><rect x="454" y="905" width="1" height="67" fill="#cfcfcf"/><rect x="483" y="905" width="1" height="67" fill="#9c9c9c"/><rect x="512" y="905" width="1" height="67" fill="#cfcfcf"/><rect x="541" y="905" width="1" height="67" fill="#cfcfcf"/><rect x="570" y="905" width="1" height="67" fill="#cfcfcf"/><rect x="599" y="905" width="1" height="67" fill="#9c9c9c"/><rect x="628" y="905" width="1" height="67" fill="#cfcfcf"/><rect x="657" y="905" width="1" height="67" fill="#cfcfcf"/><rect x="686" y="905" width="1" height="67" fill="#cfcfcf"/><rect x="715" y="905" width="1" height="67" fill="#9c9c9c"/><rect x="744" y="905" width="1" height="67" fill="#cfcfcf"/><rect x="773" y="905" width="1" height="67" fill="#cfcfcf"/><rect x="802" y="905" width="1" height="67" fill="#cfcfcf"/><rect x="831" y="905" width="1" height="67" fill="#9c9c9c"/><rect x="860" y="905" width="1" height="67" fill="#cfcfcf"/><rect x="889" y="905" width="1" height="67" fill="#cfcfcf"/><rect x="918" y="905" width="1" height="67" fill="#cfcfcf"/><rect x="947" y="905" width="1" height="67" fill="#9c9c9c"/><rect x="976" y="905" width="1" height="67" fill="#cfcfcf"/><rect x="1005" y="905" width="1" height="67" fill="#cfcfcf"/><rect x="1034" y="905" width="1" height="67" fill="#cfcfcf"/><rect x="1063" y="905" width="1" height="67" fill="#9c9c9c"/><rect x="1092" y="905" width="1" height="67" fill="#cfcfcf"/><rect x="1121" y="905" width="1" height="67" fill="#cfcfcf"/><rect x="1150" y="905" width="1" height="67" fill="#cfcfcf"/><rect x="1179" y="905" width="1" height="67" fill="#9c9c9c"/><rect x="1208" y="905" width="1" height="67" fill="#cfcfcf"/><rect x="1237" y="905" width="1" height="67" fill="#cfcfcf"/><rect x="1266" y="905" width="1" height="67" fill="#cfcfcf"/><rect x="1295" y="905" width="1" height="67" fill="#9c9c9c"/><rect x="1324" y="905" width="1" height="67" fill="#cfcfcf"/><rect x="1353" y="905" width="1" height="67" fill="#cfcfcf"/><rect x="1382" y="905" width="1" height="67" fill="#cfcfcf"/><rect x="1411" y="905" width="1" height="67" fill="#9c9c9c"/><rect x="1440" y="905" width="1" height="67" fill="#cfcfcf"/><rect x="1469" y="905" width="1" height="67" fill="#cfcfcf"/><rect x="1498" y="905" width="1" height="67" fill="#cfcfcf"/><rect x="1527" y="905" width="1" height="67" fill="#9c9c9c"/><rect x="1556" y="905" width="1" height="67" fill="#cfcfcf"/><rect x="1585" y="905" width="1" height="67" fill="#cfcfcf"/><rect x="1614" y="905" width="1" height="67" fill="#cfcfcf"/><rect x="1643" y="905" width="1" height="67" fill="#9c9c9c"/><rect x="1672" y="905" width="1" height="67" fill="#cfcfcf"/><rect x="1701" y="905" width="1" height="67" fill="#cfcfcf"/><rect x="1730" y="905" width="1" height="67" fill="#cfcfcf"/><rect x="1759" y="905" width="1" height="67" fill="#9c9c9c"/><rect x="1788" y="905" width="1" height="67" fill="#cfcfcf"/><rect x="1817" y="905" width="1" height="67" fill="#cfcfcf"/><rect x="1846" y="905" width="1" height="67" fill="#cfcfcf"/><rect x="1875" y="905" width="1" height="67" fill="#9c9c9c"/><rect x="330" y="292" width="36" height="12" fill="#17703a"/><rect x="330" y="293" width="35" height="10" fill="#2d9b57"/><rect x="330" y="293" width="35" height="1" fill="#62d38d"/><rect x="330" y="344" width="35" height="12" fill="#17703a"/><rect x="330" y="345" width="34" height="10" fill="#2d9b57"/><rect x="330" y="345" width="34" height="1" fill="#62d38d"/><rect x="330" y="409" width="36" height="12" fill="#17703a"/><rect x="330" y="410" width="35" height="10" fill="#2d9b57"/><rect x="330" y="410" width="35" height="1" fill="#62d38d"/><rect x="330" y="500" width="28" height="12" fill="#17703a"/><rect x="330" y="501" width="27" height="10" fill="#2d9b57"/><rect x="330" y="501" width="27" height="1" fill="#62d38d"/><rect x="330" y="656" width="29" height="12" fill="#17703a"/><rect x="330" y="657" width="28" height="10" fill="#2d9b57"/><rect x="330" y="657" width="28" height="1" fill="#62d38d"/><rect x="599" y="279" width="109" height="12" fill="#17703a"/><rect x="600" y="280" width="107" height="10" fill="#2d9b57"/><rect x="600" y="280" width="107" height="1" fill="#62d38d"/><rect x="600" y="280" width="1" height="9" fill="#62d38d"/><rect x="715" y="279" width="56" height="12" fill="#17703a"/><rect x="716" y="280" width="54" height="10" fill="#2d9b57"/><rect x="716" y="280" width="54" height="1" fill="#62d38d"/><rect x="716" y="280" width="1" height="9" fill="#62d38d"/><rect x="541" y="292" width="54" height="12" fill="#17703a"/><rect x="542" y="293" width="52" height="10" fill="#2d9b57"/><rect x="542" y="293" width="52" height="1" fill="#62d38d"/><rect x="542" y="293" width="1" height="9" fill="#62d38d"/><rect x="773" y="292" width="57" height="12" fill="#17703a"/><rect x="774" y="293" width="55" height="10" fill="#2d9b57"/><rect x="774" y="293" width="55" height="1" fill="#62d38d"/><rect x="774" y="293" width="1" height="9" fill="#62d38d"/><rect x="367" y="318" width="169" height="12" fill="#17703a"/><rect x="368" y="319" width="167" height="10" fill="#2d9b57"/><rect x="368" y="319" width="167" height="1" fill="#62d38d"/><rect x="368" y="319" width="1" height="9" fill="#62d38d"/><rect x="599" y="318" width="105" height="12" fill="#17703a"/><rect x="600" y="319" width="103" height="10" fill="#2d9b57"/><rect x="600" y="319" width="103" height="1" fill="#62d38d"/><rect x="600" y="319" width="1" height="9" fill="#62d38d"/><rect x="541" y="344" width="55" height="12" fill="#17703a"/><rect x="542" y="345" width="53" height="10" fill="#2d9b57"/><rect x="542" y="345" width="53" height="1" fill="#62d38d"/><rect x="542" y="345" width="1" height="9" fill="#62d38d"/><rect x="715" y="344" width="57" height="12" fill="#17703a"/><rect x="716" y="345" width="55" height="10" fill="#2d9b57"/><rect x="716" y="345" width="55" height="1" fill="#62d38d"/><rect x="716" y="345" width="1" height="9" fill="#62d38d"/><rect x="773" y="344" width="56" height="12" fill="#17703a"/><rect x="774" y="345" width="54" height="10" fill="#2d9b57"/><rect x="774" y="345" width="54" height="1" fill="#62d38d"/><rect x="774" y="345" width="1" height="9" fill="#62d38d"/><rect x="367" y="370" width="111" height="12" fill="#17703a"/><rect x="368" y="371" width="109" height="10" fill="#2d9b57"/><rect x="368" y="371" width="109" height="1" fill="#62d38d"/><rect x="368" y="371" width="1" height="9" fill="#62d38d"/><rect x="483" y="383" width="55" height="12" fill="#17703a"/><rect x="484" y="384" width="53" height="10" fill="#2d9b57"/><rect x="484" y="384" width="53" height="1" fill="#62d38d"/><rect x="484" y="384" width="1" height="9" fill="#62d38d"/><rect x="541" y="383" width="55" height="12" fill="#17703a"/><rect x="542" y="384" width="53" height="10" fill="#2d9b57"/><rect x="542" y="384" width="53" height="1" fill="#62d38d"/><rect x="542" y="384" width="1" height="9" fill="#62d38d"/><rect x="599" y="383" width="107" height="12" fill="#17703a"/><rect x="600" y="384" width="105" height="10" fill="#2d9b57"/><rect x="600" y="384" width="105" height="1" fill="#62d38d"/><rect x="600" y="384" width="1" height="9" fill="#62d38d"/><rect x="715" y="383" width="56" height="12" fill="#17703a"/><rect x="716" y="384" width="54" height="10" fill="#2d9b57"/><rect x="716" y="384" width="54" height="1" fill="#62d38d"/><rect x="716" y="384" width="1" height="9" fill="#62d38d"/><rect x="367" y="409" width="112" height="12" fill="#17703a"/><rect x="368" y="410" width="110" height="10" fill="#2d9b57"/><rect x="368" y="410" width="110" height="1" fill="#62d38d"/><rect x="368" y="410" width="1" height="9" fill="#62d38d"/><rect x="773" y="409" width="57" height="12" fill="#17703a"/><rect x="774" y="410" width="55" height="10" fill="#2d9b57"/><rect x="774" y="410" width="55" height="1" fill="#62d38d"/><rect x="774" y="410" width="1" height="9" fill="#62d38d"/><rect x="483" y="435" width="54" height="12" fill="#17703a"/><rect x="484" y="436" width="52" height="10" fill="#2d9b57"/><rect x="484" y="436" width="52" height="1" fill="#62d38d"/><rect x="484" y="436" width="1" height="9" fill="#62d38d"/><rect x="715" y="435" width="46" height="12" fill="#17703a"/><rect x="716" y="436" width="44" height="10" fill="#2d9b57"/><rect x="716" y="436" width="44" height="1" fill="#62d38d"/><rect x="716" y="436" width="1" height="9" fill="#62d38d"/><rect x="599" y="474" width="98" height="12" fill="#17703a"/><rect x="600" y="475" width="96" height="10" fill="#2d9b57"/><rect x="600" y="475" width="96" height="1" fill="#62d38d"/><rect x="600" y="475" width="1" height="9" fill="#62d38d"/><rect x="773" y="500" width="49" height="12" fill="#17703a"/><rect x="774" y="501" width="47" height="10" fill="#2d9b57"/><rect x="774" y="501" width="47" height="1" fill="#62d38d"/><rect x="774" y="501" width="1" height="9" fill="#62d38d"/><rect x="367" y="565" width="110" height="12" fill="#17703a"/><rect x="368" y="566" width="108" height="10" fill="#2d9b57"/><rect x="368" y="566" width="108" height="1" fill="#62d38d"/><rect x="368" y="566" width="1" height="9" fill="#62d38d"/><rect x="483" y="591" width="56" height="12" fill="#17703a"/><rect x="484" y="592" width="54" height="10" fill="#2d9b57"/><rect x="484" y="592" width="54" height="1" fill="#62d38d"/><rect x="484" y="592" width="1" height="9" fill="#62d38d"/><rect x="700" y="591" width="58" height="12" fill="#17703a"/><rect x="701" y="592" width="56" height="10" fill="#2d9b57"/><rect x="701" y="592" width="56" height="1" fill="#62d38d"/><rect x="701" y="592" width="1" height="9" fill="#62d38d"/><rect x="599" y="630" width="95" height="12" fill="#17703a"/><rect x="600" y="631" width="93" height="10" fill="#2d9b57"/><rect x="600" y="631" width="93" height="1" fill="#62d38d"/><rect x="600" y="631" width="1" height="9" fill="#62d38d"/><rect x="773" y="656" width="50" height="12" fill="#17703a"/><rect x="774" y="657" width="48" height="10" fill="#2d9b57"/><rect x="774" y="657" width="48" height="1" fill="#62d38d"/><rect x="774" y="657" width="1" height="9" fill="#62d38d"/><rect x="541" y="695" width="55" height="12" fill="#17703a"/><rect x="542" y="696" width="53" height="10" fill="#2d9b57"/><rect x="542" y="696" width="53" height="1" fill="#62d38d"/><rect x="542" y="696" width="1" height="9" fill="#62d38d"/><rect x="367" y="721" width="112" height="12" fill="#17703a"/><rect x="368" y="722" width="110" height="10" fill="#2d9b57"/><rect x="368" y="722" width="110" height="1" fill="#62d38d"/><rect x="368" y="722" width="1" height="9" fill="#62d38d"/><rect x="483" y="747" width="59" height="12" fill="#17703a"/><rect x="484" y="748" width="57" height="10" fill="#2d9b57"/><rect x="484" y="748" width="57" height="1" fill="#62d38d"/><rect x="484" y="748" width="1" height="9" fill="#62d38d"/><rect x="1063" y="279" width="109" height="12" fill="#17703a"/><rect x="1064" y="280" width="107" height="10" fill="#2d9b57"/><rect x="1064" y="280" width="107" height="1" fill="#62d38d"/><rect x="1064" y="280" width="1" height="9" fill="#62d38d"/><rect x="1179" y="279" width="56" height="12" fill="#17703a"/><rect x="1180" y="280" width="54" height="10" fill="#2d9b57"/><rect x="1180" y="280" width="54" height="1" fill="#62d38d"/><rect x="1180" y="280" width="1" height="9" fill="#62d38d"/><rect x="1005" y="292" width="54" height="12" fill="#17703a"/><rect x="1006" y="293" width="52" height="10" fill="#2d9b57"/><rect x="1006" y="293" width="52" height="1" fill="#62d38d"/><rect x="1006" y="293" width="1" height="9" fill="#62d38d"/><rect x="1237" y="292" width="57" height="12" fill="#17703a"/><rect x="1238" y="293" width="55" height="10" fill="#2d9b57"/><rect x="1238" y="293" width="55" height="1" fill="#62d38d"/><rect x="1238" y="293" width="1" height="9" fill="#62d38d"/><rect x="831" y="318" width="169" height="12" fill="#17703a"/><rect x="832" y="319" width="167" height="10" fill="#2d9b57"/><rect x="832" y="319" width="167" height="1" fill="#62d38d"/><rect x="832" y="319" width="1" height="9" fill="#62d38d"/><rect x="1063" y="318" width="105" height="12" fill="#17703a"/><rect x="1064" y="319" width="103" height="10" fill="#2d9b57"/><rect x="1064" y="319" width="103" height="1" fill="#62d38d"/><rect x="1064" y="319" width="1" height="9" fill="#62d38d"/><rect x="1005" y="344" width="55" height="12" fill="#17703a"/><rect x="1006" y="345" width="53" height="10" fill="#2d9b57"/><rect x="1006" y="345" width="53" height="1" fill="#62d38d"/><rect x="1006" y="345" width="1" height="9" fill="#62d38d"/><rect x="1179" y="344" width="57" height="12" fill="#17703a"/><rect x="1180" y="345" width="55" height="10" fill="#2d9b57"/><rect x="1180" y="345" width="55" height="1" fill="#62d38d"/><rect x="1180" y="345" width="1" height="9" fill="#62d38d"/><rect x="1237" y="344" width="56" height="12" fill="#17703a"/><rect x="1238" y="345" width="54" height="10" fill="#2d9b57"/><rect x="1238" y="345" width="54" height="1" fill="#62d38d"/><rect x="1238" y="345" width="1" height="9" fill="#62d38d"/><rect x="831" y="370" width="111" height="12" fill="#17703a"/><rect x="832" y="371" width="109" height="10" fill="#2d9b57"/><rect x="832" y="371" width="109" height="1" fill="#62d38d"/><rect x="832" y="371" width="1" height="9" fill="#62d38d"/><rect x="947" y="383" width="55" height="12" fill="#17703a"/><rect x="948" y="384" width="53" height="10" fill="#2d9b57"/><rect x="948" y="384" width="53" height="1" fill="#62d38d"/><rect x="948" y="384" width="1" height="9" fill="#62d38d"/><rect x="1005" y="383" width="55" height="12" fill="#17703a"/><rect x="1006" y="384" width="53" height="10" fill="#2d9b57"/><rect x="1006" y="384" width="53" height="1" fill="#62d38d"/><rect x="1006" y="384" width="1" height="9" fill="#62d38d"/><rect x="1063" y="383" width="107" height="12" fill="#17703a"/><rect x="1064" y="384" width="105" height="10" fill="#2d9b57"/><rect x="1064" y="384" width="105" height="1" fill="#62d38d"/><rect x="1064" y="384" width="1" height="9" fill="#62d38d"/><rect x="1179" y="383" width="56" height="12" fill="#17703a"/><rect x="1180" y="384" width="54" height="10" fill="#2d9b57"/><rect x="1180" y="384" width="54" height="1" fill="#62d38d"/><rect x="1180" y="384" width="1" height="9" fill="#62d38d"/><rect x="831" y="409" width="112" height="12" fill="#17703a"/><rect x="832" y="410" width="110" height="10" fill="#2d9b57"/><rect x="832" y="410" width="110" height="1" fill="#62d38d"/><rect x="832" y="410" width="1" height="9" fill="#62d38d"/><rect x="1237" y="409" width="57" height="12" fill="#17703a"/><rect x="1238" y="410" width="55" height="10" fill="#2d9b57"/><rect x="1238" y="410" width="55" height="1" fill="#62d38d"/><rect x="1238" y="410" width="1" height="9" fill="#62d38d"/><rect x="947" y="435" width="54" height="12" fill="#17703a"/><rect x="948" y="436" width="52" height="10" fill="#2d9b57"/><rect x="948" y="436" width="52" height="1" fill="#62d38d"/><rect x="948" y="436" width="1" height="9" fill="#62d38d"/><rect x="1179" y="435" width="46" height="12" fill="#17703a"/><rect x="1180" y="436" width="44" height="10" fill="#2d9b57"/><rect x="1180" y="436" width="44" height="1" fill="#62d38d"/><rect x="1180" y="436" width="1" height="9" fill="#62d38d"/><rect x="1063" y="474" width="98" height="12" fill="#17703a"/><rect x="1064" y="475" width="96" height="10" fill="#2d9b57"/><rect x="1064" y="475" width="96" height="1" fill="#62d38d"/><rect x="1064" y="475" width="1" height="9" fill="#62d38d"/><rect x="1237" y="500" width="49" height="12" fill="#17703a"/><rect x="1238" y="501" width="47" height="10" fill="#2d9b57"/><rect x="1238" y="501" width="47" height="1" fill="#62d38d"/><rect x="1238" y="501" width="1" height="9" fill="#62d38d"/><rect x="831" y="565" width="110" height="12" fill="#17703a"/><rect x="832" y="566" width="108" height="10" fill="#2d9b57"/><rect x="832" y="566" width="108" height="1" fill="#62d38d"/><rect x="832" y="566" width="1" height="9" fill="#62d38d"/><rect x="947" y="591" width="56" height="12" fill="#17703a"/><rect x="948" y="592" width="54" height="10" fill="#2d9b57"/><rect x="948" y="592" width="54" height="1" fill="#62d38d"/><rect x="948" y="592" width="1" height="9" fill="#62d38d"/><rect x="1164" y="591" width="58" height="12" fill="#17703a"/><rect x="1165" y="592" width="56" height="10" fill="#2d9b57"/><rect x="1165" y="592" width="56" height="1" fill="#62d38d"/><rect x="1165" y="592" width="1" height="9" fill="#62d38d"/><rect x="1063" y="630" width="95" height="12" fill="#17703a"/><rect x="1064" y="631" width="93" height="10" fill="#2d9b57"/><rect x="1064" y="631" width="93" height="1" fill="#62d38d"/><rect x="1064" y="631" width="1" height="9" fill="#62d38d"/><rect x="1237" y="656" width="50" height="12" fill="#17703a"/><rect x="1238" y="657" width="48" height="10" fill="#2d9b57"/><rect x="1238" y="657" width="48" height="1" fill="#62d38d"/><rect x="1238" y="657" width="1" height="9" fill="#62d38d"/><rect x="1005" y="695" width="55" height="12" fill="#17703a"/><rect x="1006" y="696" width="53" height="10" fill="#2d9b57"/><rect x="1006" y="696" width="53" height="1" fill="#62d38d"/><rect x="1006" y="696" width="1" height="9" fill="#62d38d"/><rect x="831" y="721" width="112" height="12" fill="#17703a"/><rect x="832" y="722" width="110" height="10" fill="#2d9b57"/><rect x="832" y="722" width="110" height="1" fill="#62d38d"/><rect x="832" y="722" width="1" height="9" fill="#62d38d"/><rect x="947" y="747" width="59" height="12" fill="#17703a"/><rect x="948" y="748" width="57" height="10" fill="#2d9b57"/><rect x="948" y="748" width="57" height="1" fill="#62d38d"/><rect x="948" y="748" width="1" height="9" fill="#62d38d"/><rect x="1527" y="279" width="109" height="12" fill="#17703a"/><rect x="1528" y="280" width="107" height="10" fill="#2d9b57"/><rect x="1528" y="280" width="107" height="1" fill="#62d38d"/><rect x="1528" y="280" width="1" height="9" fill="#62d38d"/><rect x="1643" y="279" width="56" height="12" fill="#17703a"/><rect x="1644" y="280" width="54" height="10" fill="#2d9b57"/><rect x="1644" y="280" width="54" height="1" fill="#62d38d"/><rect x="1644" y="280" width="1" height="9" fill="#62d38d"/><rect x="1469" y="292" width="54" height="12" fill="#17703a"/><rect x="1470" y="293" width="52" height="10" fill="#2d9b57"/><rect x="1470" y="293" width="52" height="1" fill="#62d38d"/><rect x="1470" y="293" width="1" height="9" fill="#62d38d"/><rect x="1701" y="292" width="57" height="12" fill="#17703a"/><rect x="1702" y="293" width="55" height="10" fill="#2d9b57"/><rect x="1702" y="293" width="55" height="1" fill="#62d38d"/><rect x="1702" y="293" width="1" height="9" fill="#62d38d"/><rect x="1295" y="318" width="169" height="12" fill="#17703a"/><rect x="1296" y="319" width="167" height="10" fill="#2d9b57"/><rect x="1296" y="319" width="167" height="1" fill="#62d38d"/><rect x="1296" y="319" width="1" height="9" fill="#62d38d"/><rect x="1527" y="318" width="105" height="12" fill="#17703a"/><rect x="1528" y="319" width="103" height="10" fill="#2d9b57"/><rect x="1528" y="319" width="103" height="1" fill="#62d38d"/><rect x="1528" y="319" width="1" height="9" fill="#62d38d"/><rect x="1469" y="344" width="55" height="12" fill="#17703a"/><rect x="1470" y="345" width="53" height="10" fill="#2d9b57"/><rect x="1470" y="345" width="53" height="1" fill="#62d38d"/><rect x="1470" y="345" width="1" height="9" fill="#62d38d"/><rect x="1643" y="344" width="57" height="12" fill="#17703a"/><rect x="1644" y="345" width="55" height="10" fill="#2d9b57"/><rect x="1644" y="345" width="55" height="1" fill="#62d38d"/><rect x="1644" y="345" width="1" height="9" fill="#62d38d"/><rect x="1701" y="344" width="56" height="12" fill="#17703a"/><rect x="1702" y="345" width="54" height="10" fill="#2d9b57"/><rect x="1702" y="345" width="54" height="1" fill="#62d38d"/><rect x="1702" y="345" width="1" height="9" fill="#62d38d"/><rect x="1295" y="370" width="111" height="12" fill="#17703a"/><rect x="1296" y="371" width="109" height="10" fill="#2d9b57"/><rect x="1296" y="371" width="109" height="1" fill="#62d38d"/><rect x="1296" y="371" width="1" height="9" fill="#62d38d"/><rect x="1411" y="383" width="55" height="12" fill="#17703a"/><rect x="1412" y="384" width="53" height="10" fill="#2d9b57"/><rect x="1412" y="384" width="53" height="1" fill="#62d38d"/><rect x="1412" y="384" width="1" height="9" fill="#62d38d"/><rect x="1469" y="383" width="55" height="12" fill="#17703a"/><rect x="1470" y="384" width="53" height="10" fill="#2d9b57"/><rect x="1470" y="384" width="53" height="1" fill="#62d38d"/><rect x="1470" y="384" width="1" height="9" fill="#62d38d"/><rect x="1527" y="383" width="107" height="12" fill="#17703a"/><rect x="1528" y="384" width="105" height="10" fill="#2d9b57"/><rect x="1528" y="384" width="105" height="1" fill="#62d38d"/><rect x="1528" y="384" width="1" height="9" fill="#62d38d"/><rect x="1643" y="383" width="56" height="12" fill="#17703a"/><rect x="1644" y="384" width="54" height="10" fill="#2d9b57"/><rect x="1644" y="384" width="54" height="1" fill="#62d38d"/><rect x="1644" y="384" width="1" height="9" fill="#62d38d"/><rect x="1295" y="409" width="112" height="12" fill="#17703a"/><rect x="1296" y="410" width="110" height="10" fill="#2d9b57"/><rect x="1296" y="410" width="110" height="1" fill="#62d38d"/><rect x="1296" y="410" width="1" height="9" fill="#62d38d"/><rect x="1701" y="409" width="57" height="12" fill="#17703a"/><rect x="1702" y="410" width="55" height="10" fill="#2d9b57"/><rect x="1702" y="410" width="55" height="1" fill="#62d38d"/><rect x="1702" y="410" width="1" height="9" fill="#62d38d"/><rect x="1411" y="435" width="54" height="12" fill="#17703a"/><rect x="1412" y="436" width="52" height="10" fill="#2d9b57"/><rect x="1412" y="436" width="52" height="1" fill="#62d38d"/><rect x="1412" y="436" width="1" height="9" fill="#62d38d"/><rect x="1643" y="435" width="46" height="12" fill="#17703a"/><rect x="1644" y="436" width="44" height="10" fill="#2d9b57"/><rect x="1644" y="436" width="44" height="1" fill="#62d38d"/><rect x="1644" y="436" width="1" height="9" fill="#62d38d"/><rect x="1527" y="474" width="98" height="12" fill="#17703a"/><rect x="1528" y="475" width="96" height="10" fill="#2d9b57"/><rect x="1528" y="475" width="96" height="1" fill="#62d38d"/><rect x="1528" y="475" width="1" height="9" fill="#62d38d"/><rect x="1701" y="500" width="49" height="12" fill="#17703a"/><rect x="1702" y="501" width="47" height="10" fill="#2d9b57"/><rect x="1702" y="501" width="47" height="1" fill="#62d38d"/><rect x="1702" y="501" width="1" height="9" fill="#62d38d"/><rect x="1295" y="565" width="110" height="12" fill="#17703a"/><rect x="1296" y="566" width="108" height="10" fill="#2d9b57"/><rect x="1296" y="566" width="108" height="1" fill="#62d38d"/><rect x="1296" y="566" width="1" height="9" fill="#62d38d"/><rect x="1411" y="591" width="56" height="12" fill="#17703a"/><rect x="1412" y="592" width="54" height="10" fill="#2d9b57"/><rect x="1412" y="592" width="54" height="1" fill="#62d38d"/><rect x="1412" y="592" width="1" height="9" fill="#62d38d"/><rect x="1628" y="591" width="58" height="12" fill="#17703a"/><rect x="1629" y="592" width="56" height="10" fill="#2d9b57"/><rect x="1629" y="592" width="56" height="1" fill="#62d38d"/><rect x="1629" y="592" width="1" height="9" fill="#62d38d"/><rect x="1527" y="630" width="95" height="12" fill="#17703a"/><rect x="1528" y="631" width="93" height="10" fill="#2d9b57"/><rect x="1528" y="631" width="93" height="1" fill="#62d38d"/><rect x="1528" y="631" width="1" height="9" fill="#62d38d"/><rect x="1701" y="656" width="50" height="12" fill="#17703a"/><rect x="1702" y="657" width="48" height="10" fill="#2d9b57"/><rect x="1702" y="657" width="48" height="1" fill="#62d38d"/><rect x="1702" y="657" width="1" height="9" fill="#62d38d"/><rect x="1469" y="695" width="55" height="12" fill="#17703a"/><rect x="1470" y="696" width="53" height="10" fill="#2d9b57"/><rect x="1470" y="696" width="53" height="1" fill="#62d38d"/><rect x="1470" y="696" width="1" height="9" fill="#62d38d"/><rect x="1295" y="721" width="112" height="12" fill="#17703a"/><rect x="1296" y="722" width="110" height="10" fill="#2d9b57"/><rect x="1296" y="722" width="110" height="1" fill="#62d38d"/><rect x="1296" y="722" width="1" height="9" fill="#62d38d"/><rect x="1411" y="747" width="59" height="12" fill="#17703a"/><rect x="1412" y="748" width="57" height="10" fill="#2d9b57"/><rect x="1412" y="748" width="57" height="1" fill="#62d38d"/><rect x="1412" y="748" width="1" height="9" fill="#62d38d"/><rect x="1759" y="318" width="129" height="12" fill="#17703a"/><rect x="1760" y="319" width="128" height="10" fill="#2d9b57"/><rect x="1760" y="319" width="128" height="1" fill="#62d38d"/><rect x="1760" y="319" width="1" height="9" fill="#62d38d"/><rect x="1759" y="370" width="111" height="12" fill="#17703a"/><rect x="1760" y="371" width="109" height="10" fill="#2d9b57"/><rect x="1760" y="371" width="109" height="1" fill="#62d38d"/><rect x="1760" y="371" width="1" height="9" fill="#62d38d"/><rect x="1875" y="383" width="13" height="12" fill="#17703a"/><rect x="1876" y="384" width="12" height="10" fill="#2d9b57"/><rect x="1876" y="384" width="12" height="1" fill="#62d38d"/><rect x="1876" y="384" width="1" height="9" fill="#62d38d"/><rect x="1759" y="409" width="112" height="12" fill="#17703a"/><rect x="1760" y="410" width="110" height="10" fill="#2d9b57"/><rect x="1760" y="410" width="110" height="1" fill="#62d38d"/><rect x="1760" y="410" width="1" height="9" fill="#62d38d"/><rect x="1875" y="435" width="13" height="12" fill="#17703a"/><rect x="1876" y="436" width="12" height="10" fill="#2d9b57"/><rect x="1876" y="436" width="12" height="1" fill="#62d38d"/><rect x="1876" y="436" width="1" height="9" fill="#62d38d"/><rect x="1759" y="565" width="110" height="12" fill="#17703a"/><rect x="1760" y="566" width="108" height="10" fill="#2d9b57"/><rect x="1760" y="566" width="108" height="1" fill="#62d38d"/><rect x="1760" y="566" width="1" height="9" fill="#62d38d"/><rect x="1875" y="591" width="13" height="12" fill="#17703a"/><rect x="1876" y="592" width="12" height="10" fill="#2d9b57"/><rect x="1876" y="592" width="12" height="1" fill="#62d38d"/><rect x="1876" y="592" width="1" height="9" fill="#62d38d"/><rect x="1759" y="721" width="112" height="12" fill="#17703a"/><rect x="1760" y="722" width="110" height="10" fill="#2d9b57"/><rect x="1760" y="722" width="110" height="1" fill="#62d38d"/><rect x="1760" y="722" width="1" height="9" fill="#62d38d"/><rect x="1875" y="747" width="13" height="12" fill="#17703a"/><rect x="1876" y="748" width="12" height="10" fill="#2d9b57"/><rect x="1876" y="748" width="12" height="1" fill="#62d38d"/><rect x="1876" y="748" width="1" height="9" fill="#62d38d"/><rect x="367" y="881" width="2" height="20" fill="#1fb873"/><rect x="483" y="881" width="2" height="20" fill="#1fb873"/><rect x="541" y="881" width="2" height="20" fill="#1fb873"/><rect x="599" y="881" width="2" height="20" fill="#1fb873"/><rect x="700" y="881" width="2" height="20" fill="#1fb873"/><rect x="715" y="881" width="2" height="20" fill="#1fb873"/><rect x="773" y="881" width="2" height="20" fill="#1fb873"/><rect x="831" y="881" width="2" height="20" fill="#1fb873"/><rect x="947" y="881" width="2" height="20" fill="#1fb873"/><rect x="1005" y="881" width="2" height="20" fill="#1fb873"/><rect x="1063" y="881" width="2" height="20" fill="#1fb873"/><rect x="1164" y="881" width="2" height="20" fill="#1fb873"/><rect x="1179" y="881" width="2" height="20" fill="#1fb873"/><rect x="1237" y="881" width="2" height="20" fill="#1fb873"/><rect x="1295" y="881" width="2" height="20" fill="#1fb873"/><rect x="1411" y="881" width="2" height="20" fill="#1fb873"/><rect x="1469" y="881" width="2" height="20" fill="#1fb873"/><rect x="1527" y="881" width="2" height="20" fill="#1fb873"/><rect x="1628" y="881" width="2" height="20" fill="#1fb873"/><rect x="1643" y="881" width="2" height="20" fill="#1fb873"/><rect x="1701" y="881" width="2" height="20" fill="#1fb873"/><rect x="1759" y="881" width="2" height="20" fill="#1fb873"/><rect x="1875" y="881" width="2" height="20" fill="#1fb873"/><rect x="567" y="187" width="1" height="785" fill="#111"/><rect x="567" y="293" width="1" height="10" fill="#e060d0"/><rect x="567" y="345" width="1" height="10" fill="#e060d0"/><rect x="567" y="384" width="1" height="10" fill="#e060d0"/><rect x="567" y="696" width="1" height="10" fill="#e060d0"/></svg>
<div style="left:1888px;top:187px;width:18px;height:599px;background:linear-gradient(90deg,#e8e8e8,#f4f4f4 30%,#f0f0f0);"></div>
<div style="left:1887px;top:179px;width:19px;height:2px;background:#6a6a6a;"></div>
<svg style="left:1893px;top:192px" width="8" height="5"><path d="M0 5h8L4 0z" fill="#333"/></svg>
<svg style="left:1893px;top:775px" width="8" height="5"><path d="M0 0h8L4 5z" fill="#333"/></svg>
<div style="left:1889px;top:454px;width:16px;height:15px;background:linear-gradient(90deg,#fdfdfd,#c8c8c8);border:1px solid #8a8a8a;border-radius:2px;"></div>
<div style="left:1912px;top:138px;width:1px;height:855px;background:#9c9c9c;"></div>
<div style="left:1913px;top:138px;width:1px;height:855px;background:#dadada;"></div>
<svg style="left:1890px;top:788px" width="16" height="16" viewBox="0 0 16 16"><circle cx="5.500" cy="5.500" r="4.500" fill="#f4f4f4" stroke="#111" stroke-width="1.600"/><path d="M2.500 5.500h6" stroke="#111" stroke-width="2"/><path d="M9 9l5.500 5.500" stroke="#111" stroke-width="2.400"/></svg>
<div style="left:1888px;top:805px;width:17px;height:8px;background:#480606;border-top:1px solid #f0f0f0;border-left:1px solid #f0f0f0;"></div>
<svg style="left:1890px;top:815px" width="16" height="16" viewBox="0 0 16 16"><circle cx="5.500" cy="5.500" r="4.500" fill="#f4f4f4" stroke="#111" stroke-width="1.600"/><path d="M2.500 5.500h6M5.500 2.500v6" stroke="#111" stroke-width="2"/><path d="M9 9l5.500 5.500" stroke="#111" stroke-width="2.400"/></svg>
<div style="left:233px;top:838px;width:90px;height:66px;background:#dcdcdc;"></div>
<div style="left:233px;top:904px;width:90px;height:1px;background:#fff;"></div>
<div style="left:233px;top:905px;width:90px;height:67px;background:#f0f0f0;"></div>
<div class="t" style="left:236px;top:840px;width:40px;height:11px;line-height:11px;font-size:9.500px;color:#000;">Velocity</div>
<div class="t r" style="left:290px;top:839px;width:29px;height:11px;line-height:11px;font-size:9.500px;color:#000;">127</div>
<div class="t r" style="left:290px;top:867px;width:29px;height:11px;line-height:11px;font-size:9.500px;color:#000;">64</div>
<div class="t r" style="left:290px;top:893px;width:29px;height:11px;line-height:11px;font-size:9.500px;color:#000;">0</div>
<div class="t" style="left:236px;top:907px;width:60px;height:11px;line-height:11px;font-size:9.500px;color:#000;">CC:&nbsp;&nbsp; 7 : Volu</div>
<div class="t r" style="left:290px;top:906px;width:29px;height:11px;line-height:11px;font-size:9.500px;color:#000;">127</div>
<div class="t r" style="left:290px;top:934px;width:29px;height:11px;line-height:11px;font-size:9.500px;color:#000;">64</div>
<div class="t r" style="left:290px;top:960px;width:29px;height:11px;line-height:11px;font-size:9.500px;color:#000;">0</div>
<div style="left:234px;top:894px;width:9px;height:9px;border:1px solid #111;background:#b8b8b8;"></div>
<div style="left:235px;top:898px;width:7px;height:1px;background:#111;"></div>
<div style="left:238px;top:895px;width:1px;height:7px;background:#111;"></div>
<div style="left:244px;top:894px;width:9px;height:9px;border:1px solid #111;background:#b8b8b8;"></div>
<div style="left:246px;top:898px;width:4px;height:1px;background:#111;"></div>
<div style="left:234px;top:961px;width:9px;height:9px;border:1px solid #111;background:#b8b8b8;"></div>
<div style="left:235px;top:965px;width:7px;height:1px;background:#111;"></div>
<div style="left:238px;top:962px;width:1px;height:7px;background:#111;"></div>
<div style="left:244px;top:961px;width:9px;height:9px;border:1px solid #111;background:#b8b8b8;"></div>
<div style="left:246px;top:965px;width:4px;height:1px;background:#111;"></div>
<div style="left:233px;top:973px;width:90px;height:18px;background:#f0f0f0;"></div>
<svg style="left:237px;top:977px" width="6" height="9"><path d="M5 0v9L0 4.500z" fill="#9a9a9a"/></svg>
<svg style="left:313px;top:977px" width="6" height="9"><path d="M0 0v9L5 4.500z" fill="#9a9a9a"/></svg>
<div style="left:330px;top:973px;width:1513px;height:18px;background:#f0f0f0;"></div>
<div style="left:330px;top:973px;width:17px;height:18px;background:#f6f6f6;"></div>
<svg style="left:335px;top:977px" width="6" height="9"><path d="M5 0v9L0 4.500z" fill="#222"/></svg>
<svg style="left:1831px;top:977px" width="6" height="9"><path d="M0 0v9L5 4.500z" fill="#4a4a4a"/></svg>
<div style="left:879px;top:974px;width:13px;height:16px;background:linear-gradient(#fdfdfd,#c8c8c8);border:1px solid #8a8a8a;border-radius:2px;"></div>
<svg style="left:1845px;top:974px" width="16" height="16" viewBox="0 0 16 16"><circle cx="5.500" cy="5.500" r="4.500" fill="#f4f4f4" stroke="#111" stroke-width="1.600"/><path d="M2.500 5.500h6" stroke="#111" stroke-width="2"/><path d="M9 9l5.500 5.500" stroke="#111" stroke-width="2.400"/></svg>
<div style="left:1863px;top:973px;width:7px;height:18px;background:#dcdcdc;"></div>
<div style="left:1863px;top:979px;width:7px;height:11px;background:#4a0a0a;"></div>
<svg style="left:1872px;top:974px" width="16" height="16" viewBox="0 0 16 16"><circle cx="5.500" cy="5.500" r="4.500" fill="#f4f4f4" stroke="#111" stroke-width="1.600"/><path d="M2.500 5.500h6M5.500 2.500v6" stroke="#111" stroke-width="2"/><path d="M9 9l5.500 5.500" stroke="#111" stroke-width="2.400"/></svg>
<div class="t" style="left:1656px;top:956px;width:180px;height:30px;line-height:30px;font-family:'DejaVu Sans',sans-serif;font-size:20.500px;letter-spacing:1.100px;color:#8e8e8e;transform-origin:0 0;transform:scaleX(1.075);text-shadow:0 0 1px #fff,0 0 2px #fff,0 0 2px #fff,0 0 3px #fff,3px 4px 4px rgba(0,0,0,.6);">SonarMusic.ru</div>
<div style="left:230px;top:995px;width:1685px;height:20px;background:#c6c6c6;border-radius:0 0 4px 4px;"></div>
<div style="left:230px;top:997px;width:79px;height:18px;background:linear-gradient(#b4b4b4,#c8c8c8);border-radius:0 0 0 4px;"></div>
<div style="left:310px;top:997px;width:137px;height:18px;background:linear-gradient(#b4b4b4,#c8c8c8);"></div>
<div style="left:448px;top:995px;width:180px;height:20px;background:#d2d2d2;"></div>
<div style="left:630px;top:996px;width:1282px;height:1px;background:#d8d8d8;"></div>
<div style="left:309px;top:997px;width:2px;height:18px;background:#2a2a2a;"></div>
<div style="left:447px;top:997px;width:2px;height:18px;background:#2a2a2a;"></div>
<div style="left:628px;top:997px;width:2px;height:18px;background:#2a2a2a;"></div>
<div class="t" style="left:242px;top:997px;width:60px;height:17px;line-height:17px;font-size:12px;color:#222;letter-spacing:-0.350px;">Console</div>
<div class="t" style="left:326px;top:997px;width:110px;height:17px;line-height:17px;font-size:12px;color:#222;letter-spacing:-0.560px;">Step Sequencer Hi</div>
<div class="t" style="left:457px;top:997px;width:160px;height:17px;line-height:17px;font-size:12px;color:#000;font-weight:bold;letter-spacing:-0.320px;">Piano Roll - Phased Strings</div>
<svg style="left:615px;top:1001px" width="9" height="9"><path d="M1 1l7 7M8 1l-7 7" stroke="#555" stroke-width="1.800"/></svg>
<svg style="left:1874px;top:1000px" width="12" height="12" viewBox="0 0 12 12"><rect x="1" y="1" width="6" height="5" fill="none" stroke="#222" stroke-width="1.300"/><rect x="4.500" y="5.500" width="6" height="5" fill="#c4c4c4" stroke="#222" stroke-width="1.300"/></svg>
<svg style="left:1889px;top:1002px" width="8" height="7"><path d="M0 0h8L4 7z" fill="#222"/></svg>
<svg style="left:1901px;top:999px" width="9" height="12"><path d="M0 1h9M0 6h9L4.500 11z" fill="#222" stroke="#222"/><path d="M0 2h9L4.500 6z" fill="#222"/></svg>
<div style="left:5px;top:111px;width:220px;height:904px;background:#cdcdcd;border-radius:5px;"></div>
<div style="left:11px;top:111px;width:208px;height:19px;background:linear-gradient(#e6e6e6,#c6c6c6);border-bottom:1px solid #a0a0a0;"></div>
<div style="left:63px;top:112px;width:1px;height:18px;background:#a8a8a8;"></div>
<div style="left:64px;top:112px;width:1px;height:18px;background:#f0f0f0;"></div>
<div style="left:114px;top:112px;width:1px;height:18px;background:#a8a8a8;"></div>
<div style="left:115px;top:112px;width:1px;height:18px;background:#f0f0f0;"></div>
<div style="left:166px;top:112px;width:1px;height:18px;background:#a8a8a8;"></div>
<div style="left:167px;top:112px;width:1px;height:18px;background:#f0f0f0;"></div>
<div style="left:167px;top:111px;width:52px;height:19px;background:linear-gradient(#62d0f6,#36b0e0);"></div>
<div class="t c" style="left:64px;top:112px;width:50px;height:18px;line-height:18px;font-size:12px;color:#2a2a2a;">Clip</div>
<div class="t c" style="left:115px;top:112px;width:51px;height:18px;line-height:18px;font-size:12px;color:#2a2a2a;">Track</div>
<div class="t c" style="left:167px;top:112px;width:52px;height:18px;line-height:18px;font-size:12px;color:#0a1a24;">ProCh</div>
<svg style="left:16px;top:115px" width="40" height="11" viewBox="0 0 40 11"><path d="M5.500 1.500v7L1 5zM10.500 1.500v7L6 5z" fill="#222"/><rect x="17.500" y="0.500" width="6" height="5.500" fill="none" stroke="#222" stroke-width="1.200"/><rect x="21" y="4" width="6" height="5.500" fill="#d8d8d8" stroke="#222" stroke-width="1.200"/><path d="M32 2h7L35.500 8.500z" fill="#222"/></svg>
<div style="left:10px;top:135px;width:210px;height:855px;background:#1c1c1c;"></div>
<div style="left:14px;top:139px;width:202px;height:847px;background:#8c8c8c;border-radius:2px;"></div>
<div style="left:14px;top:192px;width:202px;height:1px;background:#7a7a7a;"></div>
<div style="left:14px;top:193px;width:4px;height:752px;background:#9c9c9c;"></div>
<div style="left:18px;top:193px;width:1px;height:752px;background:#7a7a7a;"></div>
<div style="left:14px;top:945px;width:202px;height:41px;background:#a2a2a2;border-top:1px solid #505050;"></div>
<div style="left:26px;top:197px;width:138px;height:18px;background:#2c2c2c;border-radius:2px;"></div>
<div class="t" style="left:32px;top:198px;width:132px;height:18px;line-height:18px;font-size:11px;color:#4cc4f2;font-family:'DejaVu Sans','Liberation Sans',sans-serif;letter-spacing:-0.540px;">Cakewalk TTS-1 1 Outpu...</div>
<div style="left:170px;top:197px;width:18px;height:18px;background:linear-gradient(#d8d8d8,#b4b4b4);border-radius:2px;box-shadow:0 0 0 1px #6a6a6a;"></div>
<div style="left:192px;top:197px;width:18px;height:18px;background:linear-gradient(#d8d8d8,#b4b4b4);border-radius:2px;box-shadow:0 0 0 1px #6a6a6a;"></div>
<svg style="left:172px;top:200px" width="14" height="12" viewBox="0 0 14 12"><path d="M1 10.500V1.500h4l1 1.500h5v2" fill="none" stroke="#3a3a3a" stroke-width="1.200"/><path d="M1 10.500L3.500 5H13.500L11 10.500z" fill="none" stroke="#3a3a3a" stroke-width="1.200"/></svg>
<svg style="left:195px;top:200px" width="12" height="12" viewBox="0 0 12 12"><path d="M0.600 0.600h9l1.800 1.800v9h-10.800z" fill="none" stroke="#3a3a3a" stroke-width="1.200"/><rect x="3" y="0.600" width="5" height="3.500" fill="#3a3a3a"/><rect x="2.500" y="6.500" width="7" height="4.900" fill="none" stroke="#3a3a3a"/><path d="M3.500 8.500h5" stroke="#3a3a3a"/></svg>
<div style="left:26px;top:220px;width:190px;height:2px;background:#3a3a3a;"></div>
<svg width="0" height="0" style="left:0;top:0"><defs><linearGradient id="rim" x1="0" y1="0" x2="0" y2="1"><stop offset="0" stop-color="#f6f6f6"/><stop offset=".5" stop-color="#c0c0c0"/><stop offset="1" stop-color="#787878"/></linearGradient><radialGradient id="capk" cx=".5" cy=".25" r=".8"><stop offset="0" stop-color="#3c3c3c"/><stop offset="1" stop-color="#262626"/></radialGradient><radialGradient id="capm" cx=".5" cy=".25" r=".8"><stop offset="0" stop-color="#742a36"/><stop offset="1" stop-color="#581c26"/></radialGradient><radialGradient id="capb" cx=".5" cy=".25" r=".8"><stop offset="0" stop-color="#2a527a"/><stop offset="1" stop-color="#1b3c5a"/></radialGradient><radialGradient id="led"><stop offset="0" stop-color="#8a8a8a"/><stop offset="1" stop-color="#3a3a3a"/></radialGradient></defs></svg>
<div class="t" style="left:103px;top:225px;width:80px;height:16px;line-height:16px;font-size:11px;color:#111;">COMP</div>
<div style="left:184px;top:230px;width:7px;height:7px;background:radial-gradient(#707070 10%,#2e2e2e 70%);border-radius:50%;box-shadow:0 0 0 1px #505050;"></div>
<div style="left:198px;top:226px;width:13px;height:13px;background:linear-gradient(#f4f4f4,#cacaca);border-radius:50%;box-shadow:0 0 0 1px #6a6a6a,0 1px 2px rgba(0,0,0,.4);"></div>
<svg style="left:200px;top:228px" width="9" height="9" viewBox="0 0 9 9"><path d="M2.800 2a3.300 3.300 0 1 0 3.400 0" fill="none" stroke="#555" stroke-width="1.300"/><path d="M4.500 0.500v3.500" stroke="#555" stroke-width="1.300"/></svg>
<svg style="left:25px;top:224px" width="16" height="16" viewBox="0 0 16 16" shape-rendering="geometricPrecision"><path d="M0.500 3.300h15M0.500 13.300h15" stroke="#222" stroke-width="1"/><path d="M6.500 0.500h3L8 2.800zM6.500 16h3L8 13.700z" fill="#222"/><path d="M0.800 7.500C1.800 4.800 3.200 4.800 4.400 7.500S6.600 11.500 8 11.500S10.400 10 11.600 7.500S14.200 4.800 15.200 7.500" fill="none" stroke="#222" stroke-width="1.200"/></svg>
<div class="t" style="left:46px;top:228px;width:12px;height:10px;line-height:10px;font-size:8px;color:#2e2e2e;">76</div>
<div class="t" style="left:86px;top:228px;width:12px;height:10px;line-height:10px;font-size:8px;color:#2e2e2e;">4K</div>
<div style="left:59px;top:227px;width:24px;height:12px;background:#585858;border-radius:1px;box-shadow:0 2px 2px rgba(0,0,0,.3);"></div>
<div style="left:59px;top:227px;width:13px;height:12px;background:repeating-linear-gradient(90deg,#333 0,#333 1px,#4c4c4c 1px,#4c4c4c 2px);border-radius:1px;"></div>
<div style="left:53px;top:246px;width:131px;height:83px;background:#2e2e2e;border-radius:3px;box-shadow:0 0 0 1px #555;"></div>
<div style="left:60px;top:251px;width:118px;height:58px;background:radial-gradient(ellipse at 50% 55%,#f9edc0 0%,#f5e4ac 55%,#dcc080 100%);border-radius:2px;"></div>
<svg style="left:60px;top:251px" width="118" height="58" viewBox="0 0 118 58" shape-rendering="geometricPrecision"><path d="M24.4 40.5L18.4 35.2" stroke="#5a564a" stroke-width="1.100"/><path d="M29.1 35.8L23.9 29.7" stroke="#5a564a" stroke-width="1.100"/><path d="M34.4 31.8L30.1 25.1" stroke="#5a564a" stroke-width="1.100"/><path d="M40.3 28.6L36.9 21.3" stroke="#5a564a" stroke-width="1.100"/><path d="M46.5 26.1L44.1 18.5" stroke="#5a564a" stroke-width="1.100"/><path d="M53.0 24.6L51.7 16.7" stroke="#5a564a" stroke-width="1.100"/><path d="M59.6 23.9L59.4 15.9" stroke="#5a564a" stroke-width="1.100"/><path d="M66.3 24.2L67.1 16.2" stroke="#5a564a" stroke-width="1.100"/><path d="M72.9 25.3L74.8 17.5" stroke="#5a564a" stroke-width="1.100"/><path d="M79.2 27.3L82.2 19.9" stroke="#5a564a" stroke-width="1.100"/><path d="M85.3 30.2L89.2 23.2" stroke="#5a564a" stroke-width="1.100"/><path d="M24.4 40.5A49.2 49.2 0 0 1 85.3 30.2" fill="none" stroke="#8a8674" stroke-width="1.300"/><path d="M86.0 28.9A50.7 50.7 0 0 1 96.4 36.6" fill="none" stroke="#e83a30" stroke-width="4"/><path d="M92.2 31.1L94.6 27.9" stroke="#e83a30" stroke-width="1.200"/><path d="M97.5 35.6L100.2 32.7" stroke="#e83a30" stroke-width="1.200"/><text x="2.9" y="32" font-size="6.500" fill="#4a463a" font-family="Liberation Sans, sans-serif" textLength="13" lengthAdjust="spacingAndGlyphs">-20</text><text x="14.7" y="21.8" font-size="6.500" fill="#4a463a" font-family="Liberation Sans, sans-serif" textLength="12.5" lengthAdjust="spacingAndGlyphs">-16</text><text x="31.9" y="14.4" font-size="6.500" fill="#4a463a" font-family="Liberation Sans, sans-serif" textLength="12.5" lengthAdjust="spacingAndGlyphs">-12</text><text x="52.2" y="12.8" font-size="6.500" fill="#4a463a" font-family="Liberation Sans, sans-serif" textLength="8" lengthAdjust="spacingAndGlyphs">-8</text><text x="68.8" y="14.4" font-size="6.500" fill="#4a463a" font-family="Liberation Sans, sans-serif" textLength="8.5" lengthAdjust="spacingAndGlyphs">-4</text><text x="88.7" y="21.8" font-size="6.500" fill="#4a463a" font-family="Liberation Sans, sans-serif" textLength="4.5" lengthAdjust="spacingAndGlyphs">0</text><text x="102.2" y="32.700" font-size="6.500" fill="#e03030" font-family="Liberation Sans, sans-serif" textLength="4" lengthAdjust="spacingAndGlyphs">3</text><text x="50.300" y="44.600" font-size="10.500" fill="#8c7e5c" font-family="Liberation Sans, sans-serif">dB</text><path d="M66.2 58L87.500 25.800" stroke="#2c2c2c" stroke-width="1.300"/></svg>
<div style="left:112px;top:314px;width:11px;height:11px;background:#262626;border-radius:50%;box-shadow:0 0 0 1px #3c3c3c;"></div>
<div style="left:113px;top:319px;width:9px;height:1px;background:#505050;transform:rotate(30deg);"></div>
<div class="t" style="left:131px;top:315px;width:45px;height:9px;line-height:9px;font-size:6.500px;color:#7a7a7a;font-weight:bold;font-family:'Liberation Mono',monospace;letter-spacing:-0.200px;">PC76 U-TYPE</div>
<svg style="left:28px;top:333px" width="38" height="38" viewBox="-19 -19 38 38" shape-rendering="geometricPrecision"><circle cx="-8.25" cy="14.29" r="0.950" fill="#3e3e3e"/><circle cx="-14.29" cy="8.25" r="0.950" fill="#3e3e3e"/><circle cx="-16.50" cy="-0.00" r="0.950" fill="#3e3e3e"/><circle cx="-14.29" cy="-8.25" r="0.950" fill="#3e3e3e"/><circle cx="-8.25" cy="-14.29" r="0.950" fill="#3e3e3e"/><circle cx="0.00" cy="-16.50" r="0.950" fill="#3e3e3e"/><circle cx="8.25" cy="-14.29" r="0.950" fill="#3e3e3e"/><circle cx="14.29" cy="-8.25" r="0.950" fill="#3e3e3e"/><circle cx="16.50" cy="-0.00" r="0.950" fill="#3e3e3e"/><circle cx="14.29" cy="8.25" r="0.950" fill="#3e3e3e"/><circle cx="8.25" cy="14.29" r="0.950" fill="#3e3e3e"/><circle cx="0" cy="1.500" r="12" fill="#000" opacity=".25"/></svg>
<div style="left:35.5px;top:340.5px;width:23px;height:23px;border-radius:50%;background:conic-gradient(from 15deg,#ececec,#b4b4b4 12%,#8e8e8e 25%,#b8b8b8 38%,#ececec 50%,#b4b4b4 62%,#8e8e8e 75%,#b8b8b8 88%,#ececec);border:2px solid #0c0c0c;"></div>
<svg style="left:28px;top:333px" width="38" height="38" viewBox="-19 -19 38 38" shape-rendering="geometricPrecision"><path d="M-0.64 -0.48L-7.03 -5.30" stroke="#0c0c0c" stroke-width="2" stroke-linecap="butt"/></svg>
<div class="t c" style="left:17px;top:366px;width:60px;height:14px;line-height:14px;font-size:11px;color:#3e3e3e;">Input</div>
<svg style="left:76px;top:333px" width="38" height="38" viewBox="-19 -19 38 38" shape-rendering="geometricPrecision"><circle cx="-8.25" cy="14.29" r="0.950" fill="#3e3e3e"/><circle cx="-14.29" cy="8.25" r="0.950" fill="#3e3e3e"/><circle cx="-16.50" cy="-0.00" r="0.950" fill="#3e3e3e"/><circle cx="-14.29" cy="-8.25" r="0.950" fill="#3e3e3e"/><circle cx="-8.25" cy="-14.29" r="0.950" fill="#3e3e3e"/><circle cx="0.00" cy="-16.50" r="0.950" fill="#3e3e3e"/><circle cx="8.25" cy="-14.29" r="0.950" fill="#3e3e3e"/><circle cx="14.29" cy="-8.25" r="0.950" fill="#3e3e3e"/><circle cx="16.50" cy="-0.00" r="0.950" fill="#3e3e3e"/><circle cx="14.29" cy="8.25" r="0.950" fill="#3e3e3e"/><circle cx="8.25" cy="14.29" r="0.950" fill="#3e3e3e"/><circle cx="0" cy="1.500" r="12" fill="#000" opacity=".25"/></svg>
<div style="left:83.5px;top:340.5px;width:23px;height:23px;border-radius:50%;background:conic-gradient(from 15deg,#ececec,#b4b4b4 12%,#8e8e8e 25%,#b8b8b8 38%,#ececec 50%,#b4b4b4 62%,#8e8e8e 75%,#b8b8b8 88%,#ececec);border:2px solid #0c0c0c;"></div>
<svg style="left:76px;top:333px" width="38" height="38" viewBox="-19 -19 38 38" shape-rendering="geometricPrecision"><path d="M-0.71 -0.38L-7.77 -4.13" stroke="#0c0c0c" stroke-width="2" stroke-linecap="butt"/></svg>
<div class="t c" style="left:65px;top:366px;width:60px;height:14px;line-height:14px;font-size:11px;color:#3e3e3e;">Attack</div>
<svg style="left:124px;top:333px" width="38" height="38" viewBox="-19 -19 38 38" shape-rendering="geometricPrecision"><circle cx="-8.25" cy="14.29" r="0.950" fill="#3e3e3e"/><circle cx="-14.29" cy="8.25" r="0.950" fill="#3e3e3e"/><circle cx="-16.50" cy="-0.00" r="0.950" fill="#3e3e3e"/><circle cx="-14.29" cy="-8.25" r="0.950" fill="#3e3e3e"/><circle cx="-8.25" cy="-14.29" r="0.950" fill="#3e3e3e"/><circle cx="0.00" cy="-16.50" r="0.950" fill="#3e3e3e"/><circle cx="8.25" cy="-14.29" r="0.950" fill="#3e3e3e"/><circle cx="14.29" cy="-8.25" r="0.950" fill="#3e3e3e"/><circle cx="16.50" cy="-0.00" r="0.950" fill="#3e3e3e"/><circle cx="14.29" cy="8.25" r="0.950" fill="#3e3e3e"/><circle cx="8.25" cy="14.29" r="0.950" fill="#3e3e3e"/><circle cx="0" cy="1.500" r="12" fill="#000" opacity=".25"/></svg>
<div style="left:131.5px;top:340.5px;width:23px;height:23px;border-radius:50%;background:conic-gradient(from 15deg,#ececec,#b4b4b4 12%,#8e8e8e 25%,#b8b8b8 38%,#ececec 50%,#b4b4b4 62%,#8e8e8e 75%,#b8b8b8 88%,#ececec);border:2px solid #0c0c0c;"></div>
<svg style="left:124px;top:333px" width="38" height="38" viewBox="-19 -19 38 38" shape-rendering="geometricPrecision"><path d="M-0.40 -0.69L-4.40 -7.62" stroke="#0c0c0c" stroke-width="2" stroke-linecap="butt"/></svg>
<div class="t c" style="left:113px;top:366px;width:60px;height:14px;line-height:14px;font-size:11px;color:#3e3e3e;">Release</div>
<svg style="left:172px;top:333px" width="38" height="38" viewBox="-19 -19 38 38" shape-rendering="geometricPrecision"><circle cx="-8.25" cy="14.29" r="0.950" fill="#3e3e3e"/><circle cx="-14.29" cy="8.25" r="0.950" fill="#3e3e3e"/><circle cx="-16.50" cy="-0.00" r="0.950" fill="#3e3e3e"/><circle cx="-14.29" cy="-8.25" r="0.950" fill="#3e3e3e"/><circle cx="-8.25" cy="-14.29" r="0.950" fill="#3e3e3e"/><circle cx="0.00" cy="-16.50" r="0.950" fill="#3e3e3e"/><circle cx="8.25" cy="-14.29" r="0.950" fill="#3e3e3e"/><circle cx="14.29" cy="-8.25" r="0.950" fill="#3e3e3e"/><circle cx="16.50" cy="-0.00" r="0.950" fill="#3e3e3e"/><circle cx="14.29" cy="8.25" r="0.950" fill="#3e3e3e"/><circle cx="8.25" cy="14.29" r="0.950" fill="#3e3e3e"/><circle cx="0" cy="1.500" r="12" fill="#000" opacity=".25"/></svg>
<div style="left:179.5px;top:340.5px;width:23px;height:23px;border-radius:50%;background:conic-gradient(from 15deg,#ececec,#b4b4b4 12%,#8e8e8e 25%,#b8b8b8 38%,#ececec 50%,#b4b4b4 62%,#8e8e8e 75%,#b8b8b8 88%,#ececec);border:2px solid #0c0c0c;"></div>
<svg style="left:172px;top:333px" width="38" height="38" viewBox="-19 -19 38 38" shape-rendering="geometricPrecision"><path d="M0.60 -0.52L6.64 -5.77" stroke="#0c0c0c" stroke-width="2" stroke-linecap="butt"/></svg>
<div class="t c" style="left:161px;top:366px;width:60px;height:14px;line-height:14px;font-size:11px;color:#3e3e3e;">Output</div>
<svg style="left:172px;top:381px" width="38" height="38" viewBox="-19 -19 38 38" shape-rendering="geometricPrecision"><circle cx="-8.25" cy="14.29" r="0.950" fill="#3e3e3e"/><circle cx="-14.29" cy="8.25" r="0.950" fill="#3e3e3e"/><circle cx="-16.50" cy="-0.00" r="0.950" fill="#3e3e3e"/><circle cx="-14.29" cy="-8.25" r="0.950" fill="#3e3e3e"/><circle cx="-8.25" cy="-14.29" r="0.950" fill="#3e3e3e"/><circle cx="0.00" cy="-16.50" r="0.950" fill="#3e3e3e"/><circle cx="8.25" cy="-14.29" r="0.950" fill="#3e3e3e"/><circle cx="14.29" cy="-8.25" r="0.950" fill="#3e3e3e"/><circle cx="16.50" cy="-0.00" r="0.950" fill="#3e3e3e"/><circle cx="14.29" cy="8.25" r="0.950" fill="#3e3e3e"/><circle cx="8.25" cy="14.29" r="0.950" fill="#3e3e3e"/><circle cx="0" cy="1.500" r="12" fill="#000" opacity=".25"/></svg>
<div style="left:179.5px;top:388.5px;width:23px;height:23px;border-radius:50%;background:conic-gradient(from 15deg,#ececec,#b4b4b4 12%,#8e8e8e 25%,#b8b8b8 38%,#ececec 50%,#b4b4b4 62%,#8e8e8e 75%,#b8b8b8 88%,#ececec);border:2px solid #0c0c0c;"></div>
<svg style="left:172px;top:381px" width="38" height="38" viewBox="-19 -19 38 38" shape-rendering="geometricPrecision"><path d="M0.39 0.70L4.27 7.70" stroke="#0c0c0c" stroke-width="2" stroke-linecap="butt"/></svg>
<div class="t c" style="left:161px;top:414px;width:60px;height:14px;line-height:14px;font-size:11px;color:#3e3e3e;">Dry/Wet</div>
<div class="t c" style="left:65px;top:414px;width:60px;height:14px;line-height:14px;font-size:11px;color:#3e3e3e;">Ratio</div>
<div style="left:31px;top:395px;width:128px;height:18px;background:linear-gradient(#e8e8e8,#bcbcbc);border-radius:2px;box-shadow:0 0 0 1px #777;"></div>
<div style="left:31px;top:395px;width:25px;height:18px;background:linear-gradient(#6ad4f8,#3ab4e4);border-radius:2px 0 0 2px;"></div>
<div style="left:56px;top:395px;width:1px;height:18px;background:#8a8a8a;"></div>
<div style="left:82px;top:395px;width:1px;height:18px;background:#8a8a8a;"></div>
<div style="left:108px;top:395px;width:1px;height:18px;background:#8a8a8a;"></div>
<div style="left:133px;top:395px;width:1px;height:18px;background:#8a8a8a;"></div>
<div class="t c" style="left:31px;top:395px;width:26px;height:18px;line-height:18px;font-size:11px;color:#333;">4</div>
<div class="t c" style="left:56px;top:395px;width:26px;height:18px;line-height:18px;font-size:11px;color:#333;">8</div>
<div class="t c" style="left:82px;top:395px;width:26px;height:18px;line-height:18px;font-size:11px;color:#333;">12</div>
<div class="t c" style="left:108px;top:395px;width:26px;height:18px;line-height:18px;font-size:11px;color:#333;">20</div>
<div class="t c" style="left:133px;top:393px;width:26px;height:18px;line-height:18px;font-size:19px;color:#333;font-family:'DejaVu Sans',sans-serif;">&#8734;</div>
<div style="left:26px;top:430px;width:190px;height:2px;background:#3a3a3a;"></div>
<div class="t" style="left:84px;top:435px;width:80px;height:16px;line-height:16px;font-size:11px;color:#111;">EQUALIZER</div>
<div style="left:184px;top:440px;width:7px;height:7px;background:radial-gradient(#707070 10%,#2e2e2e 70%);border-radius:50%;box-shadow:0 0 0 1px #505050;"></div>
<div style="left:198px;top:436px;width:13px;height:13px;background:linear-gradient(#f4f4f4,#cacaca);border-radius:50%;box-shadow:0 0 0 1px #6a6a6a,0 1px 2px rgba(0,0,0,.4);"></div>
<svg style="left:200px;top:438px" width="9" height="9" viewBox="0 0 9 9"><path d="M2.800 2a3.300 3.300 0 1 0 3.400 0" fill="none" stroke="#555" stroke-width="1.300"/><path d="M4.500 0.500v3.500" stroke="#555" stroke-width="1.300"/></svg>
<svg style="left:25px;top:435px" width="16" height="16" viewBox="0 0 16 16" shape-rendering="geometricPrecision"><path d="M0.500 8h15" stroke="#222" stroke-width="1"/><path d="M0.800 8C4 7.500 6.500 5 8 0.800C9.500 5 12 7.500 15.200 8C12 8.500 9.500 11 8 15.200C6.500 11 4 8.500 0.800 8z" fill="none" stroke="#222" stroke-width="1.100"/></svg>
<div style="left:26px;top:455px;width:186px;height:102px;background:linear-gradient(#3c3c3c,#303030);border-radius:2px;border:1px solid #2a2a2a;"></div>
<div style="left:27px;top:456px;width:184px;height:18px;background:#2f2f2f;border-bottom:1px solid #4a4a4a;border-radius:1px 1px 0 0;"></div>
<div style="left:73px;top:474px;width:1px;height:83px;background:#565656;"></div>
<div style="left:119px;top:474px;width:1px;height:83px;background:#565656;"></div>
<div style="left:165px;top:474px;width:1px;height:83px;background:#565656;"></div>
<div style="left:26px;top:515px;width:186px;height:1px;background:#6a6a6a;"></div>
<div style="left:35px;top:462px;width:6px;height:6px;background:radial-gradient(#f0fbff 25%,#3cc0f4 70%);border-radius:50%;box-shadow:0 0 2px 1px #2a9ad0;"></div>
<div style="left:95px;top:462px;width:6px;height:6px;background:radial-gradient(#858585 15%,#2a2a2a 75%);border-radius:50%;box-shadow:0 0 0 1px #222;"></div>
<div style="left:155px;top:462px;width:6px;height:6px;background:radial-gradient(#858585 15%,#2a2a2a 75%);border-radius:50%;box-shadow:0 0 0 1px #222;"></div>
<div class="t" style="left:48px;top:457px;width:30px;height:16px;line-height:16px;font-size:11px;color:#8c8c8c;">Pure</div>
<div class="t" style="left:108px;top:457px;width:40px;height:16px;line-height:16px;font-size:11px;color:#8c8c8c;">Vintage</div>
<div class="t" style="left:168px;top:457px;width:42px;height:16px;line-height:16px;font-size:11px;color:#8c8c8c;">Modern</div>
<div style="left:71px;top:563px;width:1px;height:167px;background:#a0a0a0;"></div>
<div style="left:72px;top:563px;width:1px;height:167px;background:#6c6c6c;"></div>
<div style="left:119px;top:563px;width:1px;height:167px;background:#a0a0a0;"></div>
<div style="left:120px;top:563px;width:1px;height:167px;background:#6c6c6c;"></div>
<div style="left:166px;top:563px;width:1px;height:167px;background:#a0a0a0;"></div>
<div style="left:167px;top:563px;width:1px;height:167px;background:#6c6c6c;"></div>
<div style="left:31px;top:564px;width:32px;height:11px;background:linear-gradient(#7adcfa,#3cb8e8);border-radius:1px;box-shadow:0 0 0 1px #2a5a74;"></div>
<div class="t c" style="left:31px;top:564px;width:33px;height:11px;line-height:11px;font-size:7.500px;font-weight:bold;color:#0c2c3c;">LF</div>
<div style="left:78px;top:564px;width:32px;height:11px;background:linear-gradient(#7adcfa,#3cb8e8);border-radius:1px;box-shadow:0 0 0 1px #2a5a74;"></div>
<div class="t c" style="left:78px;top:564px;width:33px;height:11px;line-height:11px;font-size:7.500px;font-weight:bold;color:#0c2c3c;">LMF</div>
<div style="left:126px;top:564px;width:32px;height:11px;background:linear-gradient(#7adcfa,#3cb8e8);border-radius:1px;box-shadow:0 0 0 1px #2a5a74;"></div>
<div class="t c" style="left:126px;top:564px;width:33px;height:11px;line-height:11px;font-size:7.500px;font-weight:bold;color:#0c2c3c;">HMF</div>
<div style="left:174px;top:564px;width:32px;height:11px;background:linear-gradient(#7adcfa,#3cb8e8);border-radius:1px;box-shadow:0 0 0 1px #2a5a74;"></div>
<div class="t c" style="left:174px;top:564px;width:33px;height:11px;line-height:11px;font-size:7.500px;font-weight:bold;color:#0c2c3c;">HF</div>
<svg style="left:28px;top:579px" width="38" height="38" viewBox="-19 -19 38 38" shape-rendering="geometricPrecision"><circle cx="-8.25" cy="14.29" r="0.950" fill="#3e3e3e"/><circle cx="-14.29" cy="8.25" r="0.950" fill="#3e3e3e"/><circle cx="-16.50" cy="-0.00" r="0.950" fill="#3e3e3e"/><circle cx="-14.29" cy="-8.25" r="0.950" fill="#3e3e3e"/><circle cx="-8.25" cy="-14.29" r="0.950" fill="#3e3e3e"/><circle cx="0.00" cy="-16.50" r="0.950" fill="#3e3e3e"/><circle cx="8.25" cy="-14.29" r="0.950" fill="#3e3e3e"/><circle cx="14.29" cy="-8.25" r="0.950" fill="#3e3e3e"/><circle cx="16.50" cy="-0.00" r="0.950" fill="#3e3e3e"/><circle cx="14.29" cy="8.25" r="0.950" fill="#3e3e3e"/><circle cx="8.25" cy="14.29" r="0.950" fill="#3e3e3e"/><circle cx="0" cy="2" r="12.300" fill="#000" opacity=".28"/><circle cx="0" cy="0" r="12.200" fill="#5a5a5a"/><circle cx="0" cy="0" r="11.700" fill="url(#rim)"/><circle cx="0" cy="0" r="10" fill="url(#capm)"/><path d="M-0.60 -0.00L-8.50 -0.00" stroke="#f4f4f4" stroke-width="1.800" stroke-linecap="butt"/></svg>
<div class="t c" style="left:17px;top:612px;width:60px;height:14px;line-height:14px;font-size:11px;color:#3e3e3e;">Freq</div>
<svg style="left:28px;top:627px" width="38" height="38" viewBox="-19 -19 38 38" shape-rendering="geometricPrecision"><circle cx="-8.25" cy="14.29" r="0.950" fill="#3e3e3e"/><circle cx="-14.29" cy="8.25" r="0.950" fill="#3e3e3e"/><circle cx="-16.50" cy="-0.00" r="0.950" fill="#3e3e3e"/><circle cx="-14.29" cy="-8.25" r="0.950" fill="#3e3e3e"/><circle cx="-8.25" cy="-14.29" r="0.950" fill="#3e3e3e"/><circle cx="0.00" cy="-16.50" r="0.950" fill="#3e3e3e"/><circle cx="8.25" cy="-14.29" r="0.950" fill="#3e3e3e"/><circle cx="14.29" cy="-8.25" r="0.950" fill="#3e3e3e"/><circle cx="16.50" cy="-0.00" r="0.950" fill="#3e3e3e"/><circle cx="14.29" cy="8.25" r="0.950" fill="#3e3e3e"/><circle cx="8.25" cy="14.29" r="0.950" fill="#3e3e3e"/><circle cx="0" cy="2" r="12.300" fill="#000" opacity=".28"/><circle cx="0" cy="0" r="12.200" fill="#5a5a5a"/><circle cx="0" cy="0" r="11.700" fill="url(#rim)"/><circle cx="0" cy="0" r="10" fill="url(#capb)"/><path d="M0.00 -0.60L0.00 -8.50" stroke="#f4f4f4" stroke-width="1.800" stroke-linecap="butt"/></svg>
<div class="t c" style="left:17px;top:660px;width:60px;height:14px;line-height:14px;font-size:11px;color:#3e3e3e;">Q</div>
<svg style="left:28px;top:674px" width="38" height="38" viewBox="-19 -19 38 38" shape-rendering="geometricPrecision"><circle cx="-8.25" cy="14.29" r="0.950" fill="#3e3e3e"/><circle cx="-14.29" cy="8.25" r="0.950" fill="#3e3e3e"/><circle cx="-16.50" cy="-0.00" r="0.950" fill="#3e3e3e"/><circle cx="-14.29" cy="-8.25" r="0.950" fill="#3e3e3e"/><circle cx="-8.25" cy="-14.29" r="0.950" fill="#3e3e3e"/><circle cx="0.00" cy="-16.50" r="0.950" fill="#3e3e3e"/><circle cx="8.25" cy="-14.29" r="0.950" fill="#3e3e3e"/><circle cx="14.29" cy="-8.25" r="0.950" fill="#3e3e3e"/><circle cx="16.50" cy="-0.00" r="0.950" fill="#3e3e3e"/><circle cx="14.29" cy="8.25" r="0.950" fill="#3e3e3e"/><circle cx="8.25" cy="14.29" r="0.950" fill="#3e3e3e"/><circle cx="0" cy="2" r="12.300" fill="#000" opacity=".28"/><circle cx="0" cy="0" r="12.200" fill="#5a5a5a"/><circle cx="0" cy="0" r="11.700" fill="url(#rim)"/><circle cx="0" cy="0" r="10" fill="url(#capk)"/><path d="M0.00 -0.60L0.00 -8.50" stroke="#f4f4f4" stroke-width="1.800" stroke-linecap="butt"/></svg>
<div class="t c" style="left:17px;top:708px;width:60px;height:14px;line-height:14px;font-size:11px;color:#3e3e3e;">Level</div>
<svg style="left:76px;top:579px" width="38" height="38" viewBox="-19 -19 38 38" shape-rendering="geometricPrecision"><circle cx="-8.25" cy="14.29" r="0.950" fill="#3e3e3e"/><circle cx="-14.29" cy="8.25" r="0.950" fill="#3e3e3e"/><circle cx="-16.50" cy="-0.00" r="0.950" fill="#3e3e3e"/><circle cx="-14.29" cy="-8.25" r="0.950" fill="#3e3e3e"/><circle cx="-8.25" cy="-14.29" r="0.950" fill="#3e3e3e"/><circle cx="0.00" cy="-16.50" r="0.950" fill="#3e3e3e"/><circle cx="8.25" cy="-14.29" r="0.950" fill="#3e3e3e"/><circle cx="14.29" cy="-8.25" r="0.950" fill="#3e3e3e"/><circle cx="16.50" cy="-0.00" r="0.950" fill="#3e3e3e"/><circle cx="14.29" cy="8.25" r="0.950" fill="#3e3e3e"/><circle cx="8.25" cy="14.29" r="0.950" fill="#3e3e3e"/><circle cx="0" cy="2" r="12.300" fill="#000" opacity=".28"/><circle cx="0" cy="0" r="12.200" fill="#5a5a5a"/><circle cx="0" cy="0" r="11.700" fill="url(#rim)"/><circle cx="0" cy="0" r="10" fill="url(#capm)"/><path d="M-0.30 -0.52L-4.25 -7.36" stroke="#f4f4f4" stroke-width="1.800" stroke-linecap="butt"/></svg>
<div class="t c" style="left:65px;top:612px;width:60px;height:14px;line-height:14px;font-size:11px;color:#3e3e3e;">Freq</div>
<svg style="left:76px;top:627px" width="38" height="38" viewBox="-19 -19 38 38" shape-rendering="geometricPrecision"><circle cx="-8.25" cy="14.29" r="0.950" fill="#3e3e3e"/><circle cx="-14.29" cy="8.25" r="0.950" fill="#3e3e3e"/><circle cx="-16.50" cy="-0.00" r="0.950" fill="#3e3e3e"/><circle cx="-14.29" cy="-8.25" r="0.950" fill="#3e3e3e"/><circle cx="-8.25" cy="-14.29" r="0.950" fill="#3e3e3e"/><circle cx="0.00" cy="-16.50" r="0.950" fill="#3e3e3e"/><circle cx="8.25" cy="-14.29" r="0.950" fill="#3e3e3e"/><circle cx="14.29" cy="-8.25" r="0.950" fill="#3e3e3e"/><circle cx="16.50" cy="-0.00" r="0.950" fill="#3e3e3e"/><circle cx="14.29" cy="8.25" r="0.950" fill="#3e3e3e"/><circle cx="8.25" cy="14.29" r="0.950" fill="#3e3e3e"/><circle cx="0" cy="2" r="12.300" fill="#000" opacity=".28"/><circle cx="0" cy="0" r="12.200" fill="#5a5a5a"/><circle cx="0" cy="0" r="11.700" fill="url(#rim)"/><circle cx="0" cy="0" r="10" fill="url(#capb)"/><path d="M0.00 -0.60L0.00 -8.50" stroke="#f4f4f4" stroke-width="1.800" stroke-linecap="butt"/></svg>
<div class="t c" style="left:65px;top:660px;width:60px;height:14px;line-height:14px;font-size:11px;color:#3e3e3e;">Q</div>
<svg style="left:76px;top:674px" width="38" height="38" viewBox="-19 -19 38 38" shape-rendering="geometricPrecision"><circle cx="-8.25" cy="14.29" r="0.950" fill="#3e3e3e"/><circle cx="-14.29" cy="8.25" r="0.950" fill="#3e3e3e"/><circle cx="-16.50" cy="-0.00" r="0.950" fill="#3e3e3e"/><circle cx="-14.29" cy="-8.25" r="0.950" fill="#3e3e3e"/><circle cx="-8.25" cy="-14.29" r="0.950" fill="#3e3e3e"/><circle cx="0.00" cy="-16.50" r="0.950" fill="#3e3e3e"/><circle cx="8.25" cy="-14.29" r="0.950" fill="#3e3e3e"/><circle cx="14.29" cy="-8.25" r="0.950" fill="#3e3e3e"/><circle cx="16.50" cy="-0.00" r="0.950" fill="#3e3e3e"/><circle cx="14.29" cy="8.25" r="0.950" fill="#3e3e3e"/><circle cx="8.25" cy="14.29" r="0.950" fill="#3e3e3e"/><circle cx="0" cy="2" r="12.300" fill="#000" opacity=".28"/><circle cx="0" cy="0" r="12.200" fill="#5a5a5a"/><circle cx="0" cy="0" r="11.700" fill="url(#rim)"/><circle cx="0" cy="0" r="10" fill="url(#capk)"/><path d="M0.00 -0.60L0.00 -8.50" stroke="#f4f4f4" stroke-width="1.800" stroke-linecap="butt"/></svg>
<div class="t c" style="left:65px;top:708px;width:60px;height:14px;line-height:14px;font-size:11px;color:#3e3e3e;">Level</div>
<svg style="left:124px;top:579px" width="38" height="38" viewBox="-19 -19 38 38" shape-rendering="geometricPrecision"><circle cx="-8.25" cy="14.29" r="0.950" fill="#3e3e3e"/><circle cx="-14.29" cy="8.25" r="0.950" fill="#3e3e3e"/><circle cx="-16.50" cy="-0.00" r="0.950" fill="#3e3e3e"/><circle cx="-14.29" cy="-8.25" r="0.950" fill="#3e3e3e"/><circle cx="-8.25" cy="-14.29" r="0.950" fill="#3e3e3e"/><circle cx="0.00" cy="-16.50" r="0.950" fill="#3e3e3e"/><circle cx="8.25" cy="-14.29" r="0.950" fill="#3e3e3e"/><circle cx="14.29" cy="-8.25" r="0.950" fill="#3e3e3e"/><circle cx="16.50" cy="-0.00" r="0.950" fill="#3e3e3e"/><circle cx="14.29" cy="8.25" r="0.950" fill="#3e3e3e"/><circle cx="8.25" cy="14.29" r="0.950" fill="#3e3e3e"/><circle cx="0" cy="2" r="12.300" fill="#000" opacity=".28"/><circle cx="0" cy="0" r="12.200" fill="#5a5a5a"/><circle cx="0" cy="0" r="11.700" fill="url(#rim)"/><circle cx="0" cy="0" r="10" fill="url(#capm)"/><path d="M0.30 -0.52L4.25 -7.36" stroke="#f4f4f4" stroke-width="1.800" stroke-linecap="butt"/></svg>
<div class="t c" style="left:113px;top:612px;width:60px;height:14px;line-height:14px;font-size:11px;color:#3e3e3e;">Freq</div>
<svg style="left:124px;top:627px" width="38" height="38" viewBox="-19 -19 38 38" shape-rendering="geometricPrecision"><circle cx="-8.25" cy="14.29" r="0.950" fill="#3e3e3e"/><circle cx="-14.29" cy="8.25" r="0.950" fill="#3e3e3e"/><circle cx="-16.50" cy="-0.00" r="0.950" fill="#3e3e3e"/><circle cx="-14.29" cy="-8.25" r="0.950" fill="#3e3e3e"/><circle cx="-8.25" cy="-14.29" r="0.950" fill="#3e3e3e"/><circle cx="0.00" cy="-16.50" r="0.950" fill="#3e3e3e"/><circle cx="8.25" cy="-14.29" r="0.950" fill="#3e3e3e"/><circle cx="14.29" cy="-8.25" r="0.950" fill="#3e3e3e"/><circle cx="16.50" cy="-0.00" r="0.950" fill="#3e3e3e"/><circle cx="14.29" cy="8.25" r="0.950" fill="#3e3e3e"/><circle cx="8.25" cy="14.29" r="0.950" fill="#3e3e3e"/><circle cx="0" cy="2" r="12.300" fill="#000" opacity=".28"/><circle cx="0" cy="0" r="12.200" fill="#5a5a5a"/><circle cx="0" cy="0" r="11.700" fill="url(#rim)"/><circle cx="0" cy="0" r="10" fill="url(#capb)"/><path d="M0.00 -0.60L0.00 -8.50" stroke="#f4f4f4" stroke-width="1.800" stroke-linecap="butt"/></svg>
<div class="t c" style="left:113px;top:660px;width:60px;height:14px;line-height:14px;font-size:11px;color:#3e3e3e;">Q</div>
<svg style="left:124px;top:674px" width="38" height="38" viewBox="-19 -19 38 38" shape-rendering="geometricPrecision"><circle cx="-8.25" cy="14.29" r="0.950" fill="#3e3e3e"/><circle cx="-14.29" cy="8.25" r="0.950" fill="#3e3e3e"/><circle cx="-16.50" cy="-0.00" r="0.950" fill="#3e3e3e"/><circle cx="-14.29" cy="-8.25" r="0.950" fill="#3e3e3e"/><circle cx="-8.25" cy="-14.29" r="0.950" fill="#3e3e3e"/><circle cx="0.00" cy="-16.50" r="0.950" fill="#3e3e3e"/><circle cx="8.25" cy="-14.29" r="0.950" fill="#3e3e3e"/><circle cx="14.29" cy="-8.25" r="0.950" fill="#3e3e3e"/><circle cx="16.50" cy="-0.00" r="0.950" fill="#3e3e3e"/><circle cx="14.29" cy="8.25" r="0.950" fill="#3e3e3e"/><circle cx="8.25" cy="14.29" r="0.950" fill="#3e3e3e"/><circle cx="0" cy="2" r="12.300" fill="#000" opacity=".28"/><circle cx="0" cy="0" r="12.200" fill="#5a5a5a"/><circle cx="0" cy="0" r="11.700" fill="url(#rim)"/><circle cx="0" cy="0" r="10" fill="url(#capk)"/><path d="M0.00 -0.60L0.00 -8.50" stroke="#f4f4f4" stroke-width="1.800" stroke-linecap="butt"/></svg>
<div class="t c" style="left:113px;top:708px;width:60px;height:14px;line-height:14px;font-size:11px;color:#3e3e3e;">Level</div>
<svg style="left:172px;top:579px" width="38" height="38" viewBox="-19 -19 38 38" shape-rendering="geometricPrecision"><circle cx="-8.25" cy="14.29" r="0.950" fill="#3e3e3e"/><circle cx="-14.29" cy="8.25" r="0.950" fill="#3e3e3e"/><circle cx="-16.50" cy="-0.00" r="0.950" fill="#3e3e3e"/><circle cx="-14.29" cy="-8.25" r="0.950" fill="#3e3e3e"/><circle cx="-8.25" cy="-14.29" r="0.950" fill="#3e3e3e"/><circle cx="0.00" cy="-16.50" r="0.950" fill="#3e3e3e"/><circle cx="8.25" cy="-14.29" r="0.950" fill="#3e3e3e"/><circle cx="14.29" cy="-8.25" r="0.950" fill="#3e3e3e"/><circle cx="16.50" cy="-0.00" r="0.950" fill="#3e3e3e"/><circle cx="14.29" cy="8.25" r="0.950" fill="#3e3e3e"/><circle cx="8.25" cy="14.29" r="0.950" fill="#3e3e3e"/><circle cx="0" cy="2" r="12.300" fill="#000" opacity=".28"/><circle cx="0" cy="0" r="12.200" fill="#5a5a5a"/><circle cx="0" cy="0" r="11.700" fill="url(#rim)"/><circle cx="0" cy="0" r="10" fill="url(#capm)"/><path d="M0.60 -0.00L8.50 -0.00" stroke="#f4f4f4" stroke-width="1.800" stroke-linecap="butt"/></svg>
<div class="t c" style="left:161px;top:612px;width:60px;height:14px;line-height:14px;font-size:11px;color:#3e3e3e;">Freq</div>
<svg style="left:172px;top:627px" width="38" height="38" viewBox="-19 -19 38 38" shape-rendering="geometricPrecision"><circle cx="-8.25" cy="14.29" r="0.950" fill="#3e3e3e"/><circle cx="-14.29" cy="8.25" r="0.950" fill="#3e3e3e"/><circle cx="-16.50" cy="-0.00" r="0.950" fill="#3e3e3e"/><circle cx="-14.29" cy="-8.25" r="0.950" fill="#3e3e3e"/><circle cx="-8.25" cy="-14.29" r="0.950" fill="#3e3e3e"/><circle cx="0.00" cy="-16.50" r="0.950" fill="#3e3e3e"/><circle cx="8.25" cy="-14.29" r="0.950" fill="#3e3e3e"/><circle cx="14.29" cy="-8.25" r="0.950" fill="#3e3e3e"/><circle cx="16.50" cy="-0.00" r="0.950" fill="#3e3e3e"/><circle cx="14.29" cy="8.25" r="0.950" fill="#3e3e3e"/><circle cx="8.25" cy="14.29" r="0.950" fill="#3e3e3e"/><circle cx="0" cy="2" r="12.300" fill="#000" opacity=".28"/><circle cx="0" cy="0" r="12.200" fill="#5a5a5a"/><circle cx="0" cy="0" r="11.700" fill="url(#rim)"/><circle cx="0" cy="0" r="10" fill="url(#capb)"/><path d="M0.00 -0.60L0.00 -8.50" stroke="#f4f4f4" stroke-width="1.800" stroke-linecap="butt"/></svg>
<div class="t c" style="left:161px;top:660px;width:60px;height:14px;line-height:14px;font-size:11px;color:#3e3e3e;">Q</div>
<svg style="left:172px;top:674px" width="38" height="38" viewBox="-19 -19 38 38" shape-rendering="geometricPrecision"><circle cx="-8.25" cy="14.29" r="0.950" fill="#3e3e3e"/><circle cx="-14.29" cy="8.25" r="0.950" fill="#3e3e3e"/><circle cx="-16.50" cy="-0.00" r="0.950" fill="#3e3e3e"/><circle cx="-14.29" cy="-8.25" r="0.950" fill="#3e3e3e"/><circle cx="-8.25" cy="-14.29" r="0.950" fill="#3e3e3e"/><circle cx="0.00" cy="-16.50" r="0.950" fill="#3e3e3e"/><circle cx="8.25" cy="-14.29" r="0.950" fill="#3e3e3e"/><circle cx="14.29" cy="-8.25" r="0.950" fill="#3e3e3e"/><circle cx="16.50" cy="-0.00" r="0.950" fill="#3e3e3e"/><circle cx="14.29" cy="8.25" r="0.950" fill="#3e3e3e"/><circle cx="8.25" cy="14.29" r="0.950" fill="#3e3e3e"/><circle cx="0" cy="2" r="12.300" fill="#000" opacity=".28"/><circle cx="0" cy="0" r="12.200" fill="#5a5a5a"/><circle cx="0" cy="0" r="11.700" fill="url(#rim)"/><circle cx="0" cy="0" r="10" fill="url(#capk)"/><path d="M0.00 -0.60L0.00 -8.50" stroke="#f4f4f4" stroke-width="1.800" stroke-linecap="butt"/></svg>
<div class="t c" style="left:161px;top:708px;width:60px;height:14px;line-height:14px;font-size:11px;color:#3e3e3e;">Level</div>
<div style="left:36px;top:725px;width:24px;height:12px;background:#353535;border-radius:6px;box-shadow:inset 0 1px 2px #111;"></div>
<div style="left:48px;top:725px;width:12px;height:12px;background:radial-gradient(circle at 40% 35%,#ffffff,#c4c4c4);border-radius:50%;box-shadow:0 1px 1px rgba(0,0,0,.4);"></div>
<div style="left:180px;top:725px;width:24px;height:12px;background:#353535;border-radius:6px;box-shadow:inset 0 1px 2px #111;"></div>
<div style="left:180px;top:725px;width:12px;height:12px;background:radial-gradient(circle at 40% 35%,#ffffff,#c4c4c4);border-radius:50%;box-shadow:0 1px 1px rgba(0,0,0,.4);"></div>
<svg style="left:32px;top:738px" width="32" height="10" viewBox="0 0 32 10"><path d="M0.500 2h3c3 0 3 6 6 6h3" fill="none" stroke="#333" stroke-width="1"/><path d="M18 8.500c4 0 4-7 6.500-7s2.500 7 6.500 7" fill="none" stroke="#333" stroke-width="1"/></svg>
<svg style="left:176px;top:738px" width="32" height="10" viewBox="0 0 32 10"><path d="M0.500 8.500c4 0 4-7 6.500-7s2.500 7 6.500 7" fill="none" stroke="#333" stroke-width="1"/><path d="M18 8h3c3 0 3-6 6-6h3" fill="none" stroke="#333" stroke-width="1"/></svg>
<svg style="left:26px;top:728px" width="186" height="92" viewBox="0 0 186 92" shape-rendering="geometricPrecision"><path d="M0 20.500h41a4 4 0 0 0 4-4V2h96v14.500a4 4 0 0 0 4 4h41V92H0z" fill="#858585"/><path d="M0 20.500h41a4 4 0 0 0 4-4V2h96v14.500a4 4 0 0 0 4 4h41" fill="none" stroke="#737373" stroke-width="1"/><path d="M93 2v66" stroke="#6c6c6c" stroke-width="1.500"/><path d="M57 92l11.500-21.500a3 3 0 0 1 2.500-1.500h44a3 3 0 0 1 2.500 1.500L129 92z" fill="#8d8d8d" stroke="#707070" stroke-width="1.200"/></svg>
<svg style="left:76px;top:734px" width="38" height="38" viewBox="-19 -19 38 38" shape-rendering="geometricPrecision"><circle cx="0" cy="2" r="12.300" fill="#000" opacity=".28"/><circle cx="0" cy="0" r="12.200" fill="#5a5a5a"/><circle cx="0" cy="0" r="11.700" fill="url(#rim)"/><circle cx="0" cy="0" r="10" fill="url(#capb)"/><path d="M-0.58 -0.15L-8.25 -2.06" stroke="#f4f4f4" stroke-width="1.800" stroke-linecap="butt"/></svg>
<div class="t c" style="left:65px;top:768px;width:60px;height:14px;line-height:14px;font-size:11px;color:#3e3e3e;">Slope</div>
<div class="t c" style="left:71.4px;top:754.8px;width:12px;height:8px;line-height:8px;font-size:7.500px;color:#2e2e2e;">6</div>
<div class="t c" style="left:70.8px;top:745.8px;width:12px;height:8px;line-height:8px;font-size:7.500px;color:#2e2e2e;">12</div>
<div class="t c" style="left:74px;top:737.8px;width:12px;height:8px;line-height:8px;font-size:7.500px;color:#2e2e2e;">18</div>
<div class="t c" style="left:83.4px;top:733px;width:12px;height:8px;line-height:8px;font-size:7.500px;color:#2e2e2e;">24</div>
<div class="t c" style="left:94.3px;top:733px;width:12px;height:8px;line-height:8px;font-size:7.500px;color:#2e2e2e;">30</div>
<div class="t c" style="left:104.4px;top:737.8px;width:12px;height:8px;line-height:8px;font-size:7.500px;color:#2e2e2e;">36</div>
<div class="t c" style="left:107.6px;top:745.8px;width:12px;height:8px;line-height:8px;font-size:7.500px;color:#2e2e2e;">42</div>
<div class="t c" style="left:107.6px;top:754.8px;width:12px;height:8px;line-height:8px;font-size:7.500px;color:#2e2e2e;">48</div>
<svg style="left:124px;top:734px" width="38" height="38" viewBox="-19 -19 38 38" shape-rendering="geometricPrecision"><circle cx="0" cy="2" r="12.300" fill="#000" opacity=".28"/><circle cx="0" cy="0" r="12.200" fill="#5a5a5a"/><circle cx="0" cy="0" r="11.700" fill="url(#rim)"/><circle cx="0" cy="0" r="10" fill="url(#capb)"/><path d="M-0.58 -0.15L-8.25 -2.06" stroke="#f4f4f4" stroke-width="1.800" stroke-linecap="butt"/></svg>
<div class="t c" style="left:113px;top:768px;width:60px;height:14px;line-height:14px;font-size:11px;color:#3e3e3e;">Slope</div>
<div class="t c" style="left:119.4px;top:754.8px;width:12px;height:8px;line-height:8px;font-size:7.500px;color:#2e2e2e;">6</div>
<div class="t c" style="left:118.8px;top:745.8px;width:12px;height:8px;line-height:8px;font-size:7.500px;color:#2e2e2e;">12</div>
<div class="t c" style="left:122px;top:737.8px;width:12px;height:8px;line-height:8px;font-size:7.500px;color:#2e2e2e;">18</div>
<div class="t c" style="left:131.4px;top:733px;width:12px;height:8px;line-height:8px;font-size:7.500px;color:#2e2e2e;">24</div>
<div class="t c" style="left:142.3px;top:733px;width:12px;height:8px;line-height:8px;font-size:7.500px;color:#2e2e2e;">30</div>
<div class="t c" style="left:152.4px;top:737.8px;width:12px;height:8px;line-height:8px;font-size:7.500px;color:#2e2e2e;">36</div>
<div class="t c" style="left:155.6px;top:745.8px;width:12px;height:8px;line-height:8px;font-size:7.500px;color:#2e2e2e;">42</div>
<div class="t c" style="left:155.6px;top:754.8px;width:12px;height:8px;line-height:8px;font-size:7.500px;color:#2e2e2e;">48</div>
<svg style="left:28px;top:753px" width="38" height="38" viewBox="-19 -19 38 38" shape-rendering="geometricPrecision"><circle cx="-8.25" cy="14.29" r="0.950" fill="#3e3e3e"/><circle cx="-14.29" cy="8.25" r="0.950" fill="#3e3e3e"/><circle cx="-16.50" cy="-0.00" r="0.950" fill="#3e3e3e"/><circle cx="-14.29" cy="-8.25" r="0.950" fill="#3e3e3e"/><circle cx="-8.25" cy="-14.29" r="0.950" fill="#3e3e3e"/><circle cx="0.00" cy="-16.50" r="0.950" fill="#3e3e3e"/><circle cx="8.25" cy="-14.29" r="0.950" fill="#3e3e3e"/><circle cx="14.29" cy="-8.25" r="0.950" fill="#3e3e3e"/><circle cx="16.50" cy="-0.00" r="0.950" fill="#3e3e3e"/><circle cx="14.29" cy="8.25" r="0.950" fill="#3e3e3e"/><circle cx="8.25" cy="14.29" r="0.950" fill="#3e3e3e"/><circle cx="0" cy="2" r="12.300" fill="#000" opacity=".28"/><circle cx="0" cy="0" r="12.200" fill="#5a5a5a"/><circle cx="0" cy="0" r="11.700" fill="url(#rim)"/><circle cx="0" cy="0" r="10" fill="url(#capm)"/><path d="M-0.53 0.28L-7.51 3.99" stroke="#f4f4f4" stroke-width="1.800" stroke-linecap="butt"/></svg>
<div class="t c" style="left:17px;top:786px;width:60px;height:14px;line-height:14px;font-size:11px;color:#3e3e3e;">Freq</div>
<svg style="left:172px;top:753px" width="38" height="38" viewBox="-19 -19 38 38" shape-rendering="geometricPrecision"><circle cx="-8.25" cy="14.29" r="0.950" fill="#3e3e3e"/><circle cx="-14.29" cy="8.25" r="0.950" fill="#3e3e3e"/><circle cx="-16.50" cy="-0.00" r="0.950" fill="#3e3e3e"/><circle cx="-14.29" cy="-8.25" r="0.950" fill="#3e3e3e"/><circle cx="-8.25" cy="-14.29" r="0.950" fill="#3e3e3e"/><circle cx="0.00" cy="-16.50" r="0.950" fill="#3e3e3e"/><circle cx="8.25" cy="-14.29" r="0.950" fill="#3e3e3e"/><circle cx="14.29" cy="-8.25" r="0.950" fill="#3e3e3e"/><circle cx="16.50" cy="-0.00" r="0.950" fill="#3e3e3e"/><circle cx="14.29" cy="8.25" r="0.950" fill="#3e3e3e"/><circle cx="8.25" cy="14.29" r="0.950" fill="#3e3e3e"/><circle cx="0" cy="2" r="12.300" fill="#000" opacity=".28"/><circle cx="0" cy="0" r="12.200" fill="#5a5a5a"/><circle cx="0" cy="0" r="11.700" fill="url(#rim)"/><circle cx="0" cy="0" r="10" fill="url(#capm)"/><path d="M0.53 0.28L7.51 3.99" stroke="#f4f4f4" stroke-width="1.800" stroke-linecap="butt"/></svg>
<div class="t c" style="left:161px;top:786px;width:60px;height:14px;line-height:14px;font-size:11px;color:#3e3e3e;">Freq</div>
<div style="left:31px;top:803px;width:33px;height:11px;background:linear-gradient(#f4f4f4,#cccccc);border-radius:1px;box-shadow:0 0 0 1px #555,0 2px 1px rgba(0,0,0,.3);"></div>
<div class="t c" style="left:31px;top:803px;width:33px;height:12px;line-height:12px;font-size:7.500px;font-weight:bold;color:#333;letter-spacing:.4px;">HPF</div>
<div style="left:102.5px;top:803px;width:33px;height:11px;background:linear-gradient(#f4f4f4,#cccccc);border-radius:1px;box-shadow:0 0 0 1px #555,0 2px 1px rgba(0,0,0,.3);"></div>
<div class="t c" style="left:102.5px;top:803px;width:33px;height:12px;line-height:12px;font-size:7.500px;font-weight:bold;color:#333;letter-spacing:.4px;">GLOSS</div>
<div style="left:175px;top:803px;width:33px;height:11px;background:linear-gradient(#f4f4f4,#cccccc);border-radius:1px;box-shadow:0 0 0 1px #555,0 2px 1px rgba(0,0,0,.3);"></div>
<div class="t c" style="left:175px;top:803px;width:33px;height:12px;line-height:12px;font-size:7.500px;font-weight:bold;color:#333;letter-spacing:.4px;">LPF</div>
<div style="left:26px;top:820px;width:190px;height:2px;background:#3a3a3a;"></div>
<div class="t" style="left:93px;top:825px;width:80px;height:16px;line-height:16px;font-size:11px;color:#111;">TUBE SAT</div>
<div style="left:184px;top:830px;width:7px;height:7px;background:radial-gradient(#707070 10%,#2e2e2e 70%);border-radius:50%;box-shadow:0 0 0 1px #505050;"></div>
<div style="left:198px;top:826px;width:13px;height:13px;background:linear-gradient(#f4f4f4,#cacaca);border-radius:50%;box-shadow:0 0 0 1px #6a6a6a,0 1px 2px rgba(0,0,0,.4);"></div>
<svg style="left:200px;top:828px" width="9" height="9" viewBox="0 0 9 9"><path d="M2.800 2a3.300 3.300 0 1 0 3.400 0" fill="none" stroke="#555" stroke-width="1.300"/><path d="M4.500 0.500v3.500" stroke="#555" stroke-width="1.300"/></svg>
<svg style="left:27px;top:825px" width="14" height="16" viewBox="0 0 14 16"><circle cx="7" cy="7" r="5.500" fill="none" stroke="#222" stroke-width="1"/><path d="M7 0v5M0 7h14M4 5h6M4 9.500h6M5 9.500v6M9 9.500v6" stroke="#222" stroke-width="1" fill="none"/></svg>
<div style="left:54px;top:829px;width:1px;height:8px;background:#333;"></div>
<div style="left:86px;top:829px;width:1px;height:8px;background:#333;"></div>
<div style="left:88px;top:829px;width:1px;height:8px;background:#333;"></div>
<div style="left:59px;top:827px;width:24px;height:12px;background:#585858;border-radius:1px;box-shadow:0 2px 2px rgba(0,0,0,.3);"></div>
<div style="left:70px;top:827px;width:13px;height:12px;background:repeating-linear-gradient(90deg,#333 0,#333 1px,#4c4c4c 1px,#4c4c4c 2px);border-radius:1px;"></div>
<div style="left:26px;top:845px;width:190px;height:1px;background:#707070;"></div>
<svg style="left:28px;top:848px" width="38" height="38" viewBox="-19 -19 38 38" shape-rendering="geometricPrecision"><circle cx="-8.25" cy="14.29" r="0.950" fill="#3e3e3e"/><circle cx="-14.29" cy="8.25" r="0.950" fill="#3e3e3e"/><circle cx="-16.50" cy="-0.00" r="0.950" fill="#3e3e3e"/><circle cx="-14.29" cy="-8.25" r="0.950" fill="#3e3e3e"/><circle cx="-8.25" cy="-14.29" r="0.950" fill="#3e3e3e"/><circle cx="0.00" cy="-16.50" r="0.950" fill="#3e3e3e"/><circle cx="8.25" cy="-14.29" r="0.950" fill="#3e3e3e"/><circle cx="14.29" cy="-8.25" r="0.950" fill="#3e3e3e"/><circle cx="16.50" cy="-0.00" r="0.950" fill="#3e3e3e"/><circle cx="14.29" cy="8.25" r="0.950" fill="#3e3e3e"/><circle cx="8.25" cy="14.29" r="0.950" fill="#3e3e3e"/><circle cx="0" cy="2" r="12.300" fill="#000" opacity=".28"/><circle cx="0" cy="0" r="12.200" fill="#5a5a5a"/><circle cx="0" cy="0" r="11.700" fill="url(#rim)"/><circle cx="0" cy="0" r="10" fill="url(#capk)"/><path d="M0.00 -0.60L0.00 -8.50" stroke="#f4f4f4" stroke-width="1.800" stroke-linecap="butt"/></svg>
<div class="t c" style="left:17px;top:882px;width:60px;height:14px;line-height:14px;font-size:11px;color:#3e3e3e;">Input</div>
<svg style="left:76px;top:848px" width="38" height="38" viewBox="-19 -19 38 38" shape-rendering="geometricPrecision"><circle cx="-8.25" cy="14.29" r="0.950" fill="#3e3e3e"/><circle cx="-14.29" cy="8.25" r="0.950" fill="#3e3e3e"/><circle cx="-16.50" cy="-0.00" r="0.950" fill="#3e3e3e"/><circle cx="-14.29" cy="-8.25" r="0.950" fill="#3e3e3e"/><circle cx="-8.25" cy="-14.29" r="0.950" fill="#3e3e3e"/><circle cx="0.00" cy="-16.50" r="0.950" fill="#3e3e3e"/><circle cx="8.25" cy="-14.29" r="0.950" fill="#3e3e3e"/><circle cx="14.29" cy="-8.25" r="0.950" fill="#3e3e3e"/><circle cx="16.50" cy="-0.00" r="0.950" fill="#3e3e3e"/><circle cx="14.29" cy="8.25" r="0.950" fill="#3e3e3e"/><circle cx="8.25" cy="14.29" r="0.950" fill="#3e3e3e"/><circle cx="0" cy="2" r="12.300" fill="#000" opacity=".28"/><circle cx="0" cy="0" r="12.200" fill="#5a5a5a"/><circle cx="0" cy="0" r="11.700" fill="url(#rim)"/><circle cx="0" cy="0" r="10" fill="url(#capk)"/><path d="M-0.29 0.52L-4.12 7.43" stroke="#f4f4f4" stroke-width="1.800" stroke-linecap="butt"/></svg>
<div class="t c" style="left:65px;top:882px;width:60px;height:14px;line-height:14px;font-size:11px;color:#3e3e3e;">Drive</div>
<svg style="left:124px;top:848px" width="38" height="38" viewBox="-19 -19 38 38" shape-rendering="geometricPrecision"><circle cx="-8.25" cy="14.29" r="0.950" fill="#3e3e3e"/><circle cx="-14.29" cy="8.25" r="0.950" fill="#3e3e3e"/><circle cx="-16.50" cy="-0.00" r="0.950" fill="#3e3e3e"/><circle cx="-14.29" cy="-8.25" r="0.950" fill="#3e3e3e"/><circle cx="-8.25" cy="-14.29" r="0.950" fill="#3e3e3e"/><circle cx="0.00" cy="-16.50" r="0.950" fill="#3e3e3e"/><circle cx="8.25" cy="-14.29" r="0.950" fill="#3e3e3e"/><circle cx="14.29" cy="-8.25" r="0.950" fill="#3e3e3e"/><circle cx="16.50" cy="-0.00" r="0.950" fill="#3e3e3e"/><circle cx="14.29" cy="8.25" r="0.950" fill="#3e3e3e"/><circle cx="8.25" cy="14.29" r="0.950" fill="#3e3e3e"/><circle cx="0" cy="2" r="12.300" fill="#000" opacity=".28"/><circle cx="0" cy="0" r="12.200" fill="#5a5a5a"/><circle cx="0" cy="0" r="11.700" fill="url(#rim)"/><circle cx="0" cy="0" r="10" fill="url(#capk)"/><path d="M0.00 -0.60L0.00 -8.50" stroke="#f4f4f4" stroke-width="1.800" stroke-linecap="butt"/></svg>
<div class="t c" style="left:113px;top:882px;width:60px;height:14px;line-height:14px;font-size:11px;color:#3e3e3e;">Output</div>
<div style="left:174px;top:854px;width:27px;height:27px;background:#767676;border-radius:50%;"></div>
<svg style="left:177px;top:857px" width="21" height="21" viewBox="0 0 21 21"><circle cx="10.500" cy="10.500" r="8" fill="none" stroke="#bcbcbc" stroke-width="1.200"/><path d="M10.500 2v6M2.500 10.500h16M6.500 8h8M6 13.500h9M7 13.500v6M14 13.500v6" stroke="#bcbcbc" stroke-width="1.200" fill="none"/></svg>
<div style="left:26px;top:899px;width:190px;height:2px;background:#3a3a3a;"></div>
<div class="t c" style="left:60px;top:901px;width:119px;height:14px;line-height:14px;font-size:11px;color:#111;">ROUTING</div>
<div style="left:26px;top:917px;width:186px;height:24px;background:#323232;border-radius:3px;"></div>
<svg style="left:30px;top:924px" width="6" height="11"><path d="M0 0v10L5 5z" fill="#787878"/></svg>
<svg style="left:88px;top:924px" width="6" height="11"><path d="M0 0v10L5 5z" fill="#787878"/></svg>
<svg style="left:146px;top:924px" width="6" height="11"><path d="M0 0v10L5 5z" fill="#787878"/></svg>
<svg style="left:204px;top:924px" width="6" height="11"><path d="M0 0v10L5 5z" fill="#787878"/></svg>
<div style="left:41px;top:919px;width:40px;height:20px;background:#37464f;border:1px solid #2c6c9c;border-radius:3px;"></div>
<div style="left:98px;top:919px;width:40px;height:20px;background:#37464f;border:1px solid #2c6c9c;border-radius:3px;"></div>
<div style="left:155px;top:919px;width:40px;height:20px;background:#37464f;border:1px solid #2c6c9c;border-radius:3px;"></div>
<svg style="left:53px;top:921px" width="16" height="16" viewBox="0 0 16 16" shape-rendering="geometricPrecision"><path d="M0.500 3.300h15M0.500 13.300h15" stroke="#4cc4f2" stroke-width="1"/><path d="M6.500 0.500h3L8 2.800zM6.500 16h3L8 13.700z" fill="#4cc4f2"/><path d="M0.800 7.500C1.800 4.800 3.200 4.800 4.400 7.500S6.600 11.500 8 11.500S10.400 10 11.600 7.500S14.200 4.800 15.200 7.500" fill="none" stroke="#4cc4f2" stroke-width="1.200"/></svg>
<svg style="left:110px;top:922px" width="16" height="16" viewBox="0 0 16 16" shape-rendering="geometricPrecision"><path d="M0.500 8h15" stroke="#4cc4f2" stroke-width="1"/><path d="M0.800 8C4 7.500 6.500 5 8 0.800C9.500 5 12 7.500 15.200 8C12 8.500 9.500 11 8 15.200C6.500 11 4 8.500 0.800 8z" fill="none" stroke="#4cc4f2" stroke-width="1.100"/></svg>
<svg style="left:168px;top:922px" width="14" height="16" viewBox="0 0 14 16"><circle cx="7" cy="7" r="5.500" fill="none" stroke="#4cc4f2" stroke-width="1"/><path d="M7 0v5M0 7h14M4 5h6M4 9.500h6M5 9.500v6M9 9.500v6" stroke="#4cc4f2" stroke-width="1" fill="none"/></svg>
<div style="left:19px;top:951px;width:22px;height:18px;background:#333;border-radius:1px;"></div>
<div style="left:44px;top:951px;width:168px;height:18px;background:#333;"></div>
<div class="t c" style="left:19px;top:951.5px;width:22px;height:18px;line-height:18px;font-size:11px;color:#4cc4f2;font-family:'DejaVu Sans','Liberation Sans',sans-serif;letter-spacing:-0.330px;">2</div>
<div class="t" style="left:50px;top:951.5px;width:150px;height:18px;line-height:18px;font-size:11px;color:#4cc4f2;font-family:'DejaVu Sans','Liberation Sans',sans-serif;letter-spacing:-0.330px;">Phased Strings</div>
<div style="left:11px;top:995px;width:103px;height:19px;background:linear-gradient(#d8d8d8,#c2c2c2);border:1px solid #9a9a9a;border-top:none;"></div>
<div style="left:101px;top:996px;width:1px;height:17px;background:#9a9a9a;"></div>
<div style="left:117px;top:995px;width:49px;height:19px;background:#d0d0d0;border:1px solid #9a9a9a;border-top:none;"></div>
<div style="left:167px;top:995px;width:51px;height:19px;background:linear-gradient(#d8d8d8,#c2c2c2);border:1px solid #9a9a9a;border-top:none;"></div>
<div style="left:114px;top:995px;width:3px;height:20px;background:#2a2a2a;"></div>
<div style="left:165px;top:995px;width:2px;height:20px;background:#2a2a2a;"></div>
<div class="t c" style="left:11px;top:997px;width:90px;height:17px;line-height:17px;font-size:12px;color:#1a1a1a;">Display</div>
<svg style="left:103px;top:1001px" width="8" height="8"><path d="M0 0h8L4 7z" fill="#222"/></svg>
<div class="t c" style="left:117px;top:997px;width:49px;height:17px;line-height:17px;font-size:12px;color:#1a1a1a;">Audio</div>
<div class="t c" style="left:167px;top:997px;width:51px;height:17px;line-height:17px;font-size:12px;color:#1a1a1a;">Midi</div>
</body></html>
